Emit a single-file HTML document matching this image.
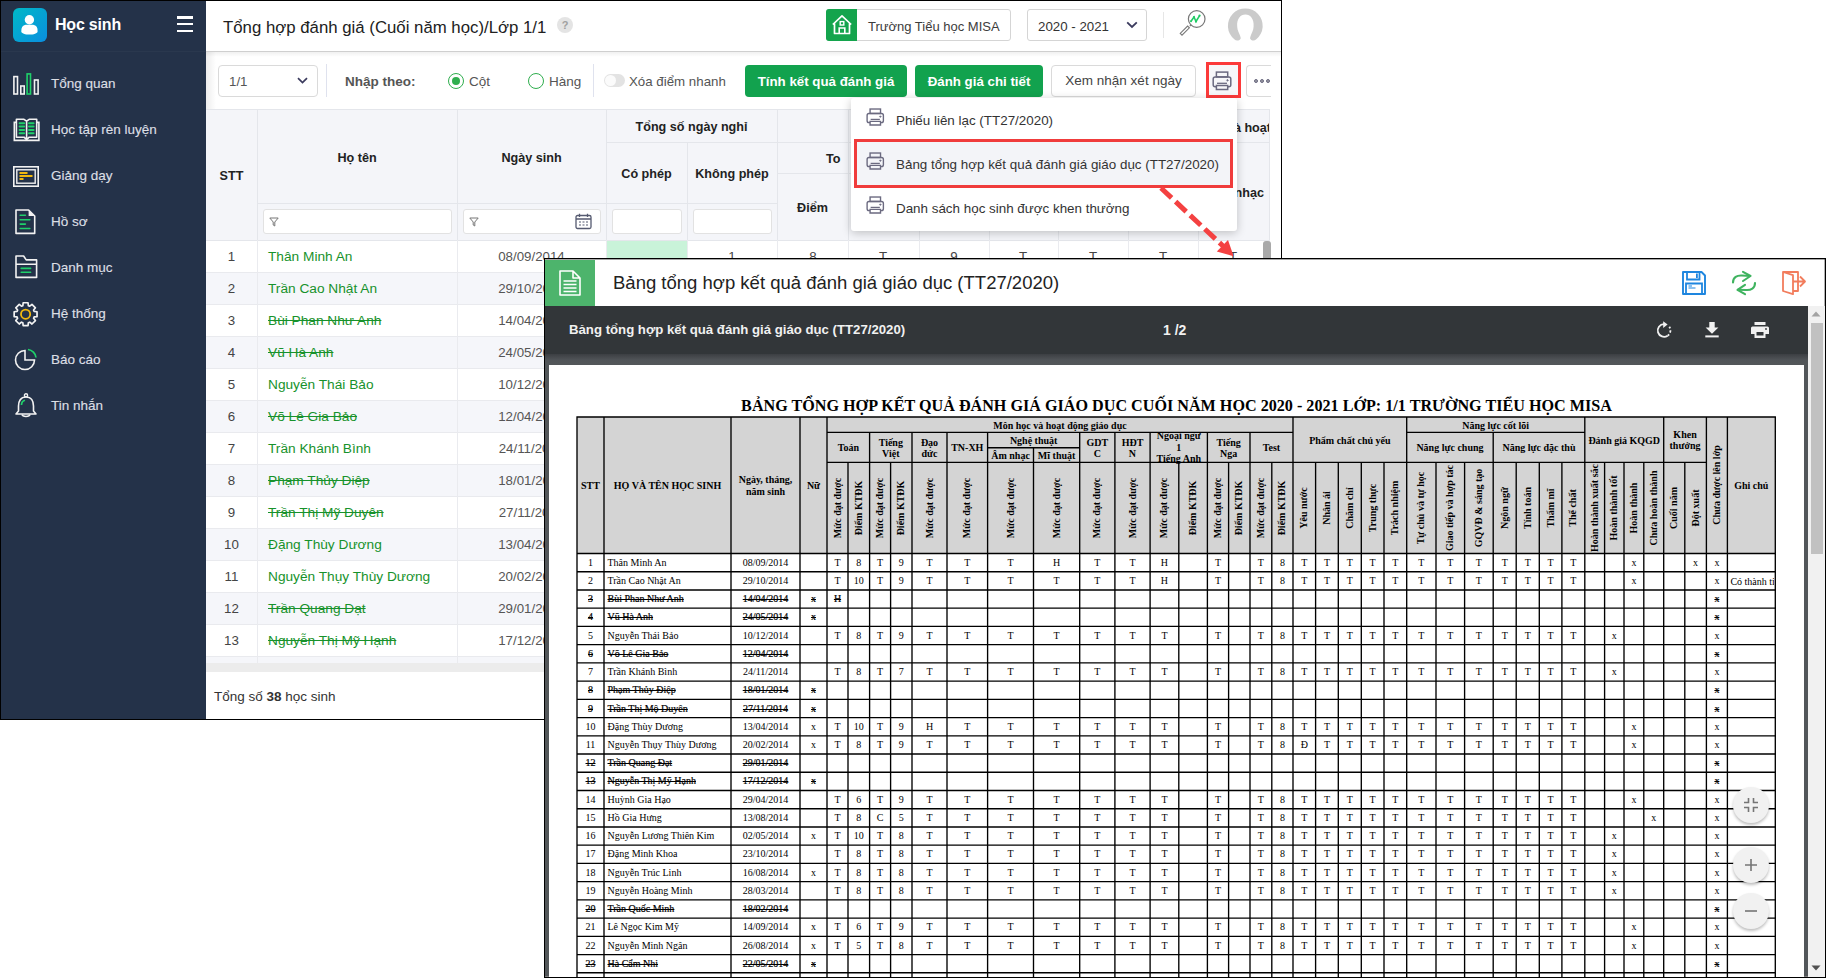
<!DOCTYPE html><html><head><meta charset="utf-8"><style>
html,body{margin:0;padding:0;}
body{width:1826px;height:978px;position:relative;overflow:hidden;background:#fff;font-family:'Liberation Sans', sans-serif;}
div{position:absolute;box-sizing:border-box;}
.t{white-space:nowrap;}
svg{position:absolute;overflow:visible;}
</style></head><body>
<div style="left:0px;top:0px;width:206px;height:720px;background:#243249;"></div>
<div style="left:206px;top:0px;width:1076px;height:720px;background:#fff;"></div>
<div style="left:206px;top:52px;width:10px;height:667px;background:linear-gradient(to right,rgba(0,0,0,0.07),rgba(0,0,0,0));"></div>
<div style="left:13px;top:8px;width:34px;height:34px;border-radius:6px;background:linear-gradient(135deg,#00b9c6 0%,#0a8ee0 100%);"></div>
<svg style="left:13px;top:8px" width="34" height="34" viewBox="0 0 34 34"><circle cx="16.4" cy="11.8" r="4.7" fill="#fff"/><path d="M8.3 23.5 C8.2 19.5 9.6 17.2 12.6 16.8 L20.2 16.8 C23.4 17.2 24.8 19.5 24.6 23.5 C24.5 27.6 8.4 27.6 8.3 23.5 Z" fill="#fff"/></svg>
<div class="t" style="font:bold 16px 'Liberation Sans', sans-serif;color:#fff;letter-spacing:-0.2px;left:55px;top:10.5px;height:28px;line-height:28px;">Học sinh</div>
<div style="left:177px;top:16.2px;width:16px;height:2.4px;background:#fff;"></div>
<div style="left:177px;top:23px;width:16px;height:2.4px;background:#fff;"></div>
<div style="left:177px;top:30px;width:16px;height:2.4px;background:#fff;"></div>
<div style="left:1px;top:51px;width:205px;height:1px;background:rgba(255,255,255,0.03);"></div>
<div class="t" style="font:13.5px 'Liberation Sans', sans-serif;color:#dcdfe4;-webkit-text-stroke:0.15px #dcdfe4;left:51px;top:73.5px;height:20px;line-height:20px;">Tổng quan</div>
<div class="t" style="font:13.5px 'Liberation Sans', sans-serif;color:#dcdfe4;-webkit-text-stroke:0.15px #dcdfe4;left:51px;top:119.5px;height:20px;line-height:20px;">Học tập rèn luyện</div>
<div class="t" style="font:13.5px 'Liberation Sans', sans-serif;color:#dcdfe4;-webkit-text-stroke:0.15px #dcdfe4;left:51px;top:165.5px;height:20px;line-height:20px;">Giảng dạy</div>
<div class="t" style="font:13.5px 'Liberation Sans', sans-serif;color:#dcdfe4;-webkit-text-stroke:0.15px #dcdfe4;left:51px;top:211.5px;height:20px;line-height:20px;">Hồ sơ</div>
<div class="t" style="font:13.5px 'Liberation Sans', sans-serif;color:#dcdfe4;-webkit-text-stroke:0.15px #dcdfe4;left:51px;top:257.5px;height:20px;line-height:20px;">Danh mục</div>
<div class="t" style="font:13.5px 'Liberation Sans', sans-serif;color:#dcdfe4;-webkit-text-stroke:0.15px #dcdfe4;left:51px;top:303.5px;height:20px;line-height:20px;">Hệ thống</div>
<div class="t" style="font:13.5px 'Liberation Sans', sans-serif;color:#dcdfe4;-webkit-text-stroke:0.15px #dcdfe4;left:51px;top:349.5px;height:20px;line-height:20px;">Báo cáo</div>
<div class="t" style="font:13.5px 'Liberation Sans', sans-serif;color:#dcdfe4;-webkit-text-stroke:0.15px #dcdfe4;left:51px;top:395.5px;height:20px;line-height:20px;">Tin nhắn</div>
<svg style="left:13px;top:73px" width="26" height="22" viewBox="0 0 26 22">
<rect x="0.9" y="3.6" width="3.6" height="17.4" fill="none" stroke="#f2f2f2" stroke-width="1.6"/>
<rect x="7.8" y="13" width="3.4" height="8" fill="none" stroke="#f2f2f2" stroke-width="1.6"/>
<rect x="14.1" y="0.9" width="3.4" height="20.1" fill="none" stroke="#1fd06a" stroke-width="1.6"/>
<rect x="21.5" y="7" width="3.6" height="14" fill="none" stroke="#f2f2f2" stroke-width="1.6"/></svg>
<svg style="left:13px;top:118px" width="28" height="25" viewBox="0 0 28 25">
<path d="M3.4 4.4 L1.3 4.4 L1.3 22.4 L25.9 22.4 L25.9 4.4 L23.7 4.4" fill="none" stroke="#f2f2f2" stroke-width="1.6"/>
<path d="M3.4 1.3 L11 1.3 L13.6 3.2 L16.2 1.3 L23.7 1.3 L23.7 19.2 L16.2 19.2 L13.6 21.6 L11 19.2 L3.4 19.2 Z M13.6 3.2 L13.6 22.5" fill="none" stroke="#f2f2f2" stroke-width="1.6" stroke-linejoin="round"/>
<path d="M6.6 5.2h4.6M6.6 8.5h4.6M6.6 12h4.6M6.6 15.3h4.6M16 5.2h4.6M16 8.5h4.6M16 12h4.6M16 15.3h4.6" stroke="#1fd06a" stroke-width="2" stroke-linecap="round"/></svg>
<svg style="left:13px;top:166px" width="26" height="21" viewBox="0 0 26 21">
<rect x="0.8" y="0.8" width="24.4" height="19.4" fill="none" stroke="#f2f2f2" stroke-width="1.6"/>
<rect x="3.8" y="3.8" width="18.4" height="13.4" fill="none" stroke="#f2f2f2" stroke-width="1.4"/>
<path d="M6.5 7h8M6.5 10h13M6.5 13h4" stroke="#f2b90f" stroke-width="1.8"/></svg>
<svg style="left:15px;top:209px" width="22" height="26" viewBox="0 0 22 26">
<path d="M1 1 L13.6 1 L19.7 7 L19.7 24.4 L1 24.4 Z" fill="none" stroke="#f2f2f2" stroke-width="1.6" stroke-linejoin="round"/>
<path d="M13.6 1 L13.6 7 L19.7 7 Z" fill="#f2f2f2"/>
<path d="M5.2 6.2h5.2M5.2 10.8h9.6M5.2 15.1h5.2M5.2 19.5h9.6" stroke="#1fd06a" stroke-width="1.6" stroke-linecap="round"/></svg>
<svg style="left:15px;top:255px" width="23" height="24" viewBox="0 0 23 24">
<path d="M1 1 L8.6 1 L11.2 4.9 L21.6 4.9 L21.6 22.4 L1 22.4 Z M1 9.2 L21.6 9.2" fill="none" stroke="#f2f2f2" stroke-width="1.6" stroke-linejoin="round"/>
<path d="M6.2 13.4h9.4M6.2 17.2h9.4" stroke="#1fd06a" stroke-width="1.6" stroke-linecap="round"/></svg>
<svg style="left:13px;top:301px" width="26" height="26" viewBox="0 0 26 26">
<path d="M21.17 10.45 L24.04 10.76 L24.04 15.64 L21.17 15.95 L20.60 17.32 L22.42 19.57 L18.97 23.02 L16.72 21.20 L15.35 21.77 L15.04 24.64 L10.16 24.64 L9.85 21.77 L8.48 21.20 L6.23 23.02 L2.78 19.57 L4.60 17.32 L4.03 15.95 L1.16 15.64 L1.16 10.76 L4.03 10.45 L4.60 9.08 L2.78 6.83 L6.23 3.38 L8.48 5.20 L9.85 4.63 L10.16 1.76 L15.04 1.76 L15.35 4.63 L16.72 5.20 L18.97 3.38 L22.42 6.83 L20.60 9.08 Z" fill="none" stroke="#f2f2f2" stroke-width="1.7" stroke-linejoin="round"/>
<circle cx="12.6" cy="13.2" r="4.6" fill="none" stroke="#f2b90f" stroke-width="1.8"/></svg>
<svg style="left:14px;top:348px" width="24" height="24" viewBox="0 0 24 24">
<path d="M11 2.5 A9.5 9.5 0 1 0 20.5 12 L11 12 Z" fill="none" stroke="#f2f2f2" stroke-width="1.6"/>
<path d="M14 1.5 A9 9 0 0 1 22 9.5" fill="none" stroke="#1fd06a" stroke-width="1.7"/></svg>
<svg style="left:14px;top:393px" width="24" height="25" viewBox="0 0 24 25">
<circle cx="12" cy="2.3" r="1.6" fill="none" stroke="#f2f2f2" stroke-width="1.4"/>
<path d="M12 4 C6.5 4 4.5 8.5 4.5 13 L4.5 18 L2 21 L22 21 L19.5 18 L19.5 13 C19.5 8.5 17.5 4 12 4 Z" fill="none" stroke="#f2f2f2" stroke-width="1.6" stroke-linejoin="round"/>
<path d="M8 21.5 C8.5 24 15.5 24 16 21.5" fill="none" stroke="#f2f2f2" stroke-width="1.5"/>
<path d="M7.5 12 C7.6 9.5 9 7.8 11 7.3" fill="none" stroke="#1fd06a" stroke-width="1.7"/></svg>
<div style="left:206px;top:51px;width:1075px;height:1px;background:#cfcfcf;"></div>
<div style="left:206px;top:52px;width:1075px;height:5px;background:linear-gradient(to bottom,rgba(0,0,0,0.06),rgba(0,0,0,0));"></div>
<div class="t" style="font:16.8px 'Liberation Sans', sans-serif;color:#212121;left:223px;top:16.5px;height:22px;line-height:22px;">Tổng hợp đánh giá (Cuối năm học)/Lớp 1/1</div>
<div style="left:557px;top:17px;width:16px;height:16px;border-radius:50%;background:#e4e4e4;color:#a0a0a0;font:bold 11px 'Liberation Sans';text-align:center;line-height:16px;">?</div>
<div style="left:826px;top:9px;width:185px;height:32px;border:1px solid #d5d5d5;border-radius:3px;background:#fff;"></div>
<div style="left:826px;top:9px;width:31px;height:32px;border-radius:3px 0 0 3px;background:#14a44d;"></div>
<svg style="left:832px;top:14px" width="20" height="21" viewBox="0 0 20 21">
<path d="M2.5 9.5 L2.5 19.5 L17.5 19.5 L17.5 9.5 M0.8 10.5 L10 1.8 L19.2 10.5" fill="none" stroke="#fff" stroke-width="1.7" stroke-linejoin="round"/>
<path d="M7.2 19.5 L7.2 14 L12.8 14 L12.8 19.5" fill="none" stroke="#fff" stroke-width="1.6"/>
<rect x="8.2" y="7.6" width="3.6" height="3.4" fill="none" stroke="#fff" stroke-width="1.4"/></svg>
<div class="t" style="font:13px 'Liberation Sans', sans-serif;color:#3c3c3c;left:868px;top:16.5px;height:20px;line-height:20px;">Trường Tiểu học MISA</div>
<div style="left:1027px;top:9px;width:120px;height:32px;border:1px solid #d5d5d5;border-radius:3px;background:#fff;"></div>
<div class="t" style="font:13.3px 'Liberation Sans', sans-serif;color:#333;left:1038px;top:16.5px;height:20px;line-height:20px;">2020 - 2021</div>
<svg style="left:1126px;top:21px" width="12" height="8" viewBox="0 0 12 8"><path d="M1.2 1.3 L6 6 L10.8 1.3" fill="none" stroke="#3b3b5e" stroke-width="1.8"/></svg>
<div style="left:1163px;top:12px;width:1px;height:26px;background:#e6e6e6;"></div>
<svg style="left:1179px;top:9px" width="28" height="28" viewBox="0 0 28 28">
<circle cx="17.7" cy="10" r="8.3" fill="#fff" stroke="#777" stroke-width="1.2"/>
<path d="M1.2 24.4 L3 26.2 L10.4 18.8 L8.6 17 Z" fill="#fff" stroke="#777" stroke-width="1.1"/>
<path d="M10.8 17.2 L12.4 15.6" stroke="#777" stroke-width="1.2"/>
<path d="M12 12.3 L15 8 L17 12.5 L20.6 6.6" fill="none" stroke="#22cc66" stroke-width="1.6"/>
<circle cx="12" cy="12.3" r="1" fill="#22cc66"/><circle cx="15" cy="8" r="1.1" fill="#22cc66"/><circle cx="17" cy="12.5" r="1.1" fill="#22cc66"/><circle cx="20.6" cy="6.6" r="1.1" fill="#22cc66"/></svg>
<svg style="left:1226px;top:8px" width="40" height="40" viewBox="0 0 40 40">
<path d="M8.3 31.3 A17.4 17.4 0 1 1 30.3 31.3 Q28 33.5 25.3 32 Q23.5 31 24.2 29.3 C25.5 25 27.6 22.5 27.6 18.5 C28.2 11 24.5 6.5 19.4 6.5 C14.3 6.5 10.6 11 11.2 18.5 C11.2 22.5 13.3 25 14.6 29.3 Q15.3 31 13.5 32 Q10.6 33.5 8.3 31.3 Z" fill="#cbcbcb"/></svg>
<div style="left:218px;top:65px;width:100px;height:32px;border:1px solid #dadada;border-radius:4px;background:#fff;"></div>
<div class="t" style="font:13.3px 'Liberation Sans', sans-serif;color:#555;left:229px;top:71.5px;height:20px;line-height:20px;">1/1</div>
<svg style="left:297px;top:77px" width="11" height="8" viewBox="0 0 11 8"><path d="M1 1.2 L5.5 5.6 L10 1.2" fill="none" stroke="#3b3b5e" stroke-width="1.7"/></svg>
<div style="left:326px;top:64px;width:1px;height:33px;background:#dfe2ee;"></div>
<div class="t" style="font:bold 13.5px 'Liberation Sans', sans-serif;color:#555;left:345px;top:71.5px;height:20px;line-height:20px;">Nhập theo:</div>
<div style="left:448px;top:73px;width:16px;height:16px;border:1.6px solid #2fae4e;border-radius:50%;"></div>
<div style="left:452px;top:77px;width:8px;height:8px;background:#2fae4e;border-radius:50%;"></div>
<div class="t" style="font:13.5px 'Liberation Sans', sans-serif;color:#555;left:469px;top:71.5px;height:20px;line-height:20px;">Cột</div>
<div style="left:528px;top:73px;width:16px;height:16px;border:1.6px solid #2fae4e;border-radius:50%;"></div>
<div class="t" style="font:13.5px 'Liberation Sans', sans-serif;color:#555;left:549px;top:71.5px;height:20px;line-height:20px;">Hàng</div>
<div style="left:593px;top:64px;width:1px;height:33px;background:#dfe2ee;"></div>
<div style="left:604px;top:74px;width:21px;height:13px;border-radius:7px;background:#e3e3e3;"></div>
<div style="left:605px;top:75px;width:11px;height:11px;border-radius:50%;background:#fbfbfb;"></div>
<div class="t" style="font:13.3px 'Liberation Sans', sans-serif;color:#555;left:629px;top:71.5px;height:20px;line-height:20px;">Xóa điểm nhanh</div>
<div style="left:745px;top:65px;width:162px;height:32px;border-radius:4px;background:#12a24e;color:#fff;font:bold 13.3px 'Liberation Sans', sans-serif;text-align:center;line-height:33px;">Tính kết quả đánh giá</div>
<div style="left:915px;top:65px;width:128px;height:32px;border-radius:4px;background:#12a24e;color:#fff;font:bold 13.3px 'Liberation Sans', sans-serif;text-align:center;line-height:33px;">Đánh giá chi tiết</div>
<div style="left:1051px;top:65px;width:145px;height:32px;border-radius:4px;border:1px solid #dadada;background:#fff;color:#444;font:13.5px 'Liberation Sans', sans-serif;text-align:center;line-height:30px;">Xem nhận xét ngày</div>
<div style="left:1206px;top:62px;width:35px;height:36px;border:3px solid #fc3a3a;background:#f7f7f9;"></div>
<svg style="left:1212px;top:71px" width="20" height="20" viewBox="0 0 20 20">
<rect x="4.4" y="1.1" width="11.3" height="4.8" fill="none" stroke="#6b6a80" stroke-width="1.5"/>
<path d="M4.4 15.8 L3.2 15.8 Q1.2 15.8 1.2 13.8 L1.2 8 Q1.2 6 3.2 6 L16.8 6 Q18.8 6 18.8 8 L18.8 13.8 Q18.8 15.8 16.8 15.8 L15.7 15.8" fill="none" stroke="#6b6a80" stroke-width="1.5"/>
<path d="M4.4 18.4 L4.4 14.4 L15.7 14.4 L15.7 18.4 Z" fill="#f7f7f9" stroke="#6b6a80" stroke-width="1.5"/>
<path d="M5 12.3 H15" stroke="#6b6a80" stroke-width="1.3"/>
<path d="M15.5 8.4 L16.4 9.3 L15.5 10.2 L14.6 9.3 Z" fill="#6b6a80" stroke="#6b6a80" stroke-width="0.8"/></svg>
<div style="left:1246px;top:65px;width:25px;height:32px;border:1px solid #dadada;border-right:none;border-radius:4px 0 0 4px;background:#fff;"></div><div style="left:1271px;top:58px;width:10px;height:42px;background:#fff;"></div>
<div style="left:1254px;top:79px;width:4.2px;height:4.2px;border-radius:50%;border:1.3px solid #6b6a80;background:#9a9aa6;"></div>
<div style="left:1260px;top:79px;width:4.2px;height:4.2px;border-radius:50%;border:1.3px solid #6b6a80;background:#9a9aa6;"></div>
<div style="left:1266px;top:79px;width:4.2px;height:4.2px;border-radius:50%;border:1.3px solid #6b6a80;background:#9a9aa6;"></div>
<div style="left:1271px;top:58px;width:10px;height:51px;background:#fff;"></div>
<div style="left:206px;top:109px;width:1064px;height:131px;background:#f4f5f9;"></div>
<div style="left:206px;top:109px;width:1064px;height:1px;background:#e4e6eb;"></div>
<div style="left:206px;top:240px;width:1064px;height:1px;background:#e4e6eb;"></div>
<div style="left:257px;top:109px;width:1px;height:131px;background:#e4e6eb;"></div>
<div style="left:457px;top:109px;width:1px;height:131px;background:#e4e6eb;"></div>
<div style="left:606px;top:109px;width:1px;height:131px;background:#e4e6eb;"></div>
<div style="left:777px;top:109px;width:1px;height:131px;background:#e4e6eb;"></div>
<div style="left:848px;top:109px;width:1px;height:131px;background:#e4e6eb;"></div>
<div style="left:919px;top:109px;width:1px;height:131px;background:#e4e6eb;"></div>
<div style="left:989px;top:109px;width:1px;height:131px;background:#e4e6eb;"></div>
<div style="left:1058px;top:109px;width:1px;height:131px;background:#e4e6eb;"></div>
<div style="left:1128px;top:109px;width:1px;height:131px;background:#e4e6eb;"></div>
<div style="left:1198px;top:109px;width:1px;height:131px;background:#e4e6eb;"></div>
<div style="left:1269px;top:109px;width:1px;height:131px;background:#e4e6eb;"></div>
<div style="left:687px;top:142px;width:1px;height:98px;background:#e4e6eb;"></div>
<div style="left:606px;top:142px;width:663px;height:1px;background:#e4e6eb;"></div>
<div style="left:777px;top:173px;width:421px;height:1px;background:#e4e6eb;"></div>
<div style="left:257px;top:203px;width:520px;height:1px;background:#e4e6eb;"></div>
<div class="t" style="font:bold 12.6px 'Liberation Sans', sans-serif;color:#222;left:206px;top:165.5px;width:51px;height:20px;line-height:20px;text-align:center;">STT</div>
<div class="t" style="font:bold 12.6px 'Liberation Sans', sans-serif;color:#222;left:257px;top:147.5px;width:200px;height:20px;line-height:20px;text-align:center;">Họ tên</div>
<div class="t" style="font:bold 12.6px 'Liberation Sans', sans-serif;color:#222;left:457px;top:147.5px;width:149px;height:20px;line-height:20px;text-align:center;">Ngày sinh</div>
<div class="t" style="font:bold 12.6px 'Liberation Sans', sans-serif;color:#222;left:606px;top:116.5px;width:171px;height:20px;line-height:20px;text-align:center;">Tổng số ngày nghỉ</div>
<div class="t" style="font:bold 12.6px 'Liberation Sans', sans-serif;color:#222;left:606px;top:163.5px;width:81px;height:20px;line-height:20px;text-align:center;">Có phép</div>
<div class="t" style="font:bold 12.6px 'Liberation Sans', sans-serif;color:#222;left:687px;top:163.5px;width:90px;height:20px;line-height:20px;text-align:center;">Không phép</div>
<div class="t" style="font:bold 12.6px 'Liberation Sans', sans-serif;color:#222;left:826px;top:148.5px;height:20px;line-height:20px;">To</div>
<div class="t" style="font:bold 12.6px 'Liberation Sans', sans-serif;color:#222;left:777px;top:197.5px;width:71px;height:20px;line-height:20px;text-align:center;">Điểm</div>
<div style="left:1199px;top:110px;width:70px;height:130px;overflow:hidden;">
<div class="t" style="font:bold 12.6px 'Liberation Sans', sans-serif;color:#222;right:-2px;top:7.5px;height:20px;line-height:20px;">Môn học và hoạt</div>
<div class="t" style="font:bold 12.6px 'Liberation Sans', sans-serif;color:#222;right:5px;top:72.5px;height:20px;line-height:20px;">Âm nhạc</div>
</div>
<div style="left:263px;top:209px;width:189px;height:25px;border:1px solid #e2e2e2;border-radius:3px;background:#fff;"></div>
<div style="left:463px;top:209px;width:138px;height:25px;border:1px solid #e2e2e2;border-radius:3px;background:#fff;"></div>
<div style="left:612px;top:209px;width:70px;height:25px;border:1px solid #e2e2e2;border-radius:3px;background:#fff;"></div>
<div style="left:693px;top:209px;width:79px;height:25px;border:1px solid #e2e2e2;border-radius:3px;background:#fff;"></div>
<svg style="left:269px;top:217px" width="10" height="10" viewBox="0 0 10 10"><path d="M0.8 1 L9.2 1 L5.8 5 L5.8 9 L4.2 8 L4.2 5 Z" fill="none" stroke="#777" stroke-width="1"/></svg>
<svg style="left:469px;top:217px" width="10" height="10" viewBox="0 0 10 10"><path d="M0.8 1 L9.2 1 L5.8 5 L5.8 9 L4.2 8 L4.2 5 Z" fill="none" stroke="#777" stroke-width="1"/></svg>
<svg style="left:575px;top:213px" width="17" height="17" viewBox="0 0 17 17">
<rect x="1" y="2.5" width="15" height="13" rx="1.5" fill="none" stroke="#555a70" stroke-width="1.3"/>
<path d="M1 6 L16 6 M4.5 0.8 L4.5 4 M12.5 0.8 L12.5 4" stroke="#555a70" stroke-width="1.3"/>
<path d="M4 9h2M7.5 9h2M11 9h2M4 12h2M7.5 12h2M11 12h2" stroke="#555a70" stroke-width="1.2"/></svg>
<div style="left:206px;top:241px;width:1064px;height:31px;background:#fff;"></div>
<div style="left:206px;top:272px;width:1064px;height:1px;background:#e9eaee;"></div>
<div style="left:257px;top:240px;width:1px;height:32px;background:#eaebef;"></div>
<div style="left:457px;top:240px;width:1px;height:32px;background:#eaebef;"></div>
<div style="left:606px;top:240px;width:1px;height:32px;background:#eaebef;"></div>
<div style="left:687px;top:240px;width:1px;height:32px;background:#eaebef;"></div>
<div style="left:777px;top:240px;width:1px;height:32px;background:#eaebef;"></div>
<div style="left:848px;top:240px;width:1px;height:32px;background:#eaebef;"></div>
<div style="left:919px;top:240px;width:1px;height:32px;background:#eaebef;"></div>
<div style="left:989px;top:240px;width:1px;height:32px;background:#eaebef;"></div>
<div style="left:1058px;top:240px;width:1px;height:32px;background:#eaebef;"></div>
<div style="left:1128px;top:240px;width:1px;height:32px;background:#eaebef;"></div>
<div style="left:1198px;top:240px;width:1px;height:32px;background:#eaebef;"></div>
<div style="left:1269px;top:240px;width:1px;height:32px;background:#eaebef;"></div>
<div class="t" style="font:13.3px 'Liberation Sans', sans-serif;color:#444;left:206px;top:246.7px;width:51px;height:20px;line-height:20px;text-align:center;">1</div>
<div class="t" style="font:13.7px 'Liberation Sans', sans-serif;color:#17922b;left:268px;top:246.7px;height:20px;line-height:20px;">Thân Minh An</div>
<div class="t" style="font:13.3px 'Liberation Sans', sans-serif;color:#555;left:457px;top:246.7px;width:149px;height:20px;line-height:20px;text-align:center;">08/09/2014</div>
<div style="left:206px;top:273px;width:1064px;height:31px;background:#f5f6fa;"></div>
<div style="left:206px;top:304px;width:1064px;height:1px;background:#e9eaee;"></div>
<div style="left:257px;top:272px;width:1px;height:32px;background:#eaebef;"></div>
<div style="left:457px;top:272px;width:1px;height:32px;background:#eaebef;"></div>
<div style="left:606px;top:272px;width:1px;height:32px;background:#eaebef;"></div>
<div style="left:687px;top:272px;width:1px;height:32px;background:#eaebef;"></div>
<div style="left:777px;top:272px;width:1px;height:32px;background:#eaebef;"></div>
<div style="left:848px;top:272px;width:1px;height:32px;background:#eaebef;"></div>
<div style="left:919px;top:272px;width:1px;height:32px;background:#eaebef;"></div>
<div style="left:989px;top:272px;width:1px;height:32px;background:#eaebef;"></div>
<div style="left:1058px;top:272px;width:1px;height:32px;background:#eaebef;"></div>
<div style="left:1128px;top:272px;width:1px;height:32px;background:#eaebef;"></div>
<div style="left:1198px;top:272px;width:1px;height:32px;background:#eaebef;"></div>
<div style="left:1269px;top:272px;width:1px;height:32px;background:#eaebef;"></div>
<div class="t" style="font:13.3px 'Liberation Sans', sans-serif;color:#444;left:206px;top:278.7px;width:51px;height:20px;line-height:20px;text-align:center;">2</div>
<div class="t" style="font:13.7px 'Liberation Sans', sans-serif;color:#17922b;left:268px;top:278.7px;height:20px;line-height:20px;">Trần Cao Nhật An</div>
<div class="t" style="font:13.3px 'Liberation Sans', sans-serif;color:#555;left:457px;top:278.7px;width:149px;height:20px;line-height:20px;text-align:center;">29/10/2014</div>
<div style="left:206px;top:305px;width:1064px;height:31px;background:#fff;"></div>
<div style="left:206px;top:336px;width:1064px;height:1px;background:#e9eaee;"></div>
<div style="left:257px;top:304px;width:1px;height:32px;background:#eaebef;"></div>
<div style="left:457px;top:304px;width:1px;height:32px;background:#eaebef;"></div>
<div style="left:606px;top:304px;width:1px;height:32px;background:#eaebef;"></div>
<div style="left:687px;top:304px;width:1px;height:32px;background:#eaebef;"></div>
<div style="left:777px;top:304px;width:1px;height:32px;background:#eaebef;"></div>
<div style="left:848px;top:304px;width:1px;height:32px;background:#eaebef;"></div>
<div style="left:919px;top:304px;width:1px;height:32px;background:#eaebef;"></div>
<div style="left:989px;top:304px;width:1px;height:32px;background:#eaebef;"></div>
<div style="left:1058px;top:304px;width:1px;height:32px;background:#eaebef;"></div>
<div style="left:1128px;top:304px;width:1px;height:32px;background:#eaebef;"></div>
<div style="left:1198px;top:304px;width:1px;height:32px;background:#eaebef;"></div>
<div style="left:1269px;top:304px;width:1px;height:32px;background:#eaebef;"></div>
<div class="t" style="font:13.3px 'Liberation Sans', sans-serif;color:#444;left:206px;top:310.7px;width:51px;height:20px;line-height:20px;text-align:center;">3</div>
<div class="t" style="font:13.7px 'Liberation Sans', sans-serif;color:#17922b;text-decoration:line-through;left:268px;top:310.7px;height:20px;line-height:20px;">Bùi Phan Như Anh</div>
<div class="t" style="font:13.3px 'Liberation Sans', sans-serif;color:#555;left:457px;top:310.7px;width:149px;height:20px;line-height:20px;text-align:center;">14/04/2014</div>
<div style="left:206px;top:337px;width:1064px;height:31px;background:#f5f6fa;"></div>
<div style="left:206px;top:368px;width:1064px;height:1px;background:#e9eaee;"></div>
<div style="left:257px;top:336px;width:1px;height:32px;background:#eaebef;"></div>
<div style="left:457px;top:336px;width:1px;height:32px;background:#eaebef;"></div>
<div style="left:606px;top:336px;width:1px;height:32px;background:#eaebef;"></div>
<div style="left:687px;top:336px;width:1px;height:32px;background:#eaebef;"></div>
<div style="left:777px;top:336px;width:1px;height:32px;background:#eaebef;"></div>
<div style="left:848px;top:336px;width:1px;height:32px;background:#eaebef;"></div>
<div style="left:919px;top:336px;width:1px;height:32px;background:#eaebef;"></div>
<div style="left:989px;top:336px;width:1px;height:32px;background:#eaebef;"></div>
<div style="left:1058px;top:336px;width:1px;height:32px;background:#eaebef;"></div>
<div style="left:1128px;top:336px;width:1px;height:32px;background:#eaebef;"></div>
<div style="left:1198px;top:336px;width:1px;height:32px;background:#eaebef;"></div>
<div style="left:1269px;top:336px;width:1px;height:32px;background:#eaebef;"></div>
<div class="t" style="font:13.3px 'Liberation Sans', sans-serif;color:#444;left:206px;top:342.7px;width:51px;height:20px;line-height:20px;text-align:center;">4</div>
<div class="t" style="font:13.7px 'Liberation Sans', sans-serif;color:#17922b;text-decoration:line-through;left:268px;top:342.7px;height:20px;line-height:20px;">Vũ Hà Anh</div>
<div class="t" style="font:13.3px 'Liberation Sans', sans-serif;color:#555;left:457px;top:342.7px;width:149px;height:20px;line-height:20px;text-align:center;">24/05/2014</div>
<div style="left:206px;top:369px;width:1064px;height:31px;background:#fff;"></div>
<div style="left:206px;top:400px;width:1064px;height:1px;background:#e9eaee;"></div>
<div style="left:257px;top:368px;width:1px;height:32px;background:#eaebef;"></div>
<div style="left:457px;top:368px;width:1px;height:32px;background:#eaebef;"></div>
<div style="left:606px;top:368px;width:1px;height:32px;background:#eaebef;"></div>
<div style="left:687px;top:368px;width:1px;height:32px;background:#eaebef;"></div>
<div style="left:777px;top:368px;width:1px;height:32px;background:#eaebef;"></div>
<div style="left:848px;top:368px;width:1px;height:32px;background:#eaebef;"></div>
<div style="left:919px;top:368px;width:1px;height:32px;background:#eaebef;"></div>
<div style="left:989px;top:368px;width:1px;height:32px;background:#eaebef;"></div>
<div style="left:1058px;top:368px;width:1px;height:32px;background:#eaebef;"></div>
<div style="left:1128px;top:368px;width:1px;height:32px;background:#eaebef;"></div>
<div style="left:1198px;top:368px;width:1px;height:32px;background:#eaebef;"></div>
<div style="left:1269px;top:368px;width:1px;height:32px;background:#eaebef;"></div>
<div class="t" style="font:13.3px 'Liberation Sans', sans-serif;color:#444;left:206px;top:374.7px;width:51px;height:20px;line-height:20px;text-align:center;">5</div>
<div class="t" style="font:13.7px 'Liberation Sans', sans-serif;color:#17922b;left:268px;top:374.7px;height:20px;line-height:20px;">Nguyễn Thái Bảo</div>
<div class="t" style="font:13.3px 'Liberation Sans', sans-serif;color:#555;left:457px;top:374.7px;width:149px;height:20px;line-height:20px;text-align:center;">10/12/2014</div>
<div style="left:206px;top:401px;width:1064px;height:31px;background:#f5f6fa;"></div>
<div style="left:206px;top:432px;width:1064px;height:1px;background:#e9eaee;"></div>
<div style="left:257px;top:400px;width:1px;height:32px;background:#eaebef;"></div>
<div style="left:457px;top:400px;width:1px;height:32px;background:#eaebef;"></div>
<div style="left:606px;top:400px;width:1px;height:32px;background:#eaebef;"></div>
<div style="left:687px;top:400px;width:1px;height:32px;background:#eaebef;"></div>
<div style="left:777px;top:400px;width:1px;height:32px;background:#eaebef;"></div>
<div style="left:848px;top:400px;width:1px;height:32px;background:#eaebef;"></div>
<div style="left:919px;top:400px;width:1px;height:32px;background:#eaebef;"></div>
<div style="left:989px;top:400px;width:1px;height:32px;background:#eaebef;"></div>
<div style="left:1058px;top:400px;width:1px;height:32px;background:#eaebef;"></div>
<div style="left:1128px;top:400px;width:1px;height:32px;background:#eaebef;"></div>
<div style="left:1198px;top:400px;width:1px;height:32px;background:#eaebef;"></div>
<div style="left:1269px;top:400px;width:1px;height:32px;background:#eaebef;"></div>
<div class="t" style="font:13.3px 'Liberation Sans', sans-serif;color:#444;left:206px;top:406.7px;width:51px;height:20px;line-height:20px;text-align:center;">6</div>
<div class="t" style="font:13.7px 'Liberation Sans', sans-serif;color:#17922b;text-decoration:line-through;left:268px;top:406.7px;height:20px;line-height:20px;">Võ Lê Gia Bảo</div>
<div class="t" style="font:13.3px 'Liberation Sans', sans-serif;color:#555;left:457px;top:406.7px;width:149px;height:20px;line-height:20px;text-align:center;">12/04/2014</div>
<div style="left:206px;top:433px;width:1064px;height:31px;background:#fff;"></div>
<div style="left:206px;top:464px;width:1064px;height:1px;background:#e9eaee;"></div>
<div style="left:257px;top:432px;width:1px;height:32px;background:#eaebef;"></div>
<div style="left:457px;top:432px;width:1px;height:32px;background:#eaebef;"></div>
<div style="left:606px;top:432px;width:1px;height:32px;background:#eaebef;"></div>
<div style="left:687px;top:432px;width:1px;height:32px;background:#eaebef;"></div>
<div style="left:777px;top:432px;width:1px;height:32px;background:#eaebef;"></div>
<div style="left:848px;top:432px;width:1px;height:32px;background:#eaebef;"></div>
<div style="left:919px;top:432px;width:1px;height:32px;background:#eaebef;"></div>
<div style="left:989px;top:432px;width:1px;height:32px;background:#eaebef;"></div>
<div style="left:1058px;top:432px;width:1px;height:32px;background:#eaebef;"></div>
<div style="left:1128px;top:432px;width:1px;height:32px;background:#eaebef;"></div>
<div style="left:1198px;top:432px;width:1px;height:32px;background:#eaebef;"></div>
<div style="left:1269px;top:432px;width:1px;height:32px;background:#eaebef;"></div>
<div class="t" style="font:13.3px 'Liberation Sans', sans-serif;color:#444;left:206px;top:438.7px;width:51px;height:20px;line-height:20px;text-align:center;">7</div>
<div class="t" style="font:13.7px 'Liberation Sans', sans-serif;color:#17922b;left:268px;top:438.7px;height:20px;line-height:20px;">Trần Khánh Bình</div>
<div class="t" style="font:13.3px 'Liberation Sans', sans-serif;color:#555;left:457px;top:438.7px;width:149px;height:20px;line-height:20px;text-align:center;">24/11/2014</div>
<div style="left:206px;top:465px;width:1064px;height:31px;background:#f5f6fa;"></div>
<div style="left:206px;top:496px;width:1064px;height:1px;background:#e9eaee;"></div>
<div style="left:257px;top:464px;width:1px;height:32px;background:#eaebef;"></div>
<div style="left:457px;top:464px;width:1px;height:32px;background:#eaebef;"></div>
<div style="left:606px;top:464px;width:1px;height:32px;background:#eaebef;"></div>
<div style="left:687px;top:464px;width:1px;height:32px;background:#eaebef;"></div>
<div style="left:777px;top:464px;width:1px;height:32px;background:#eaebef;"></div>
<div style="left:848px;top:464px;width:1px;height:32px;background:#eaebef;"></div>
<div style="left:919px;top:464px;width:1px;height:32px;background:#eaebef;"></div>
<div style="left:989px;top:464px;width:1px;height:32px;background:#eaebef;"></div>
<div style="left:1058px;top:464px;width:1px;height:32px;background:#eaebef;"></div>
<div style="left:1128px;top:464px;width:1px;height:32px;background:#eaebef;"></div>
<div style="left:1198px;top:464px;width:1px;height:32px;background:#eaebef;"></div>
<div style="left:1269px;top:464px;width:1px;height:32px;background:#eaebef;"></div>
<div class="t" style="font:13.3px 'Liberation Sans', sans-serif;color:#444;left:206px;top:470.7px;width:51px;height:20px;line-height:20px;text-align:center;">8</div>
<div class="t" style="font:13.7px 'Liberation Sans', sans-serif;color:#17922b;text-decoration:line-through;left:268px;top:470.7px;height:20px;line-height:20px;">Phạm Thủy Điệp</div>
<div class="t" style="font:13.3px 'Liberation Sans', sans-serif;color:#555;left:457px;top:470.7px;width:149px;height:20px;line-height:20px;text-align:center;">18/01/2014</div>
<div style="left:206px;top:497px;width:1064px;height:31px;background:#fff;"></div>
<div style="left:206px;top:528px;width:1064px;height:1px;background:#e9eaee;"></div>
<div style="left:257px;top:496px;width:1px;height:32px;background:#eaebef;"></div>
<div style="left:457px;top:496px;width:1px;height:32px;background:#eaebef;"></div>
<div style="left:606px;top:496px;width:1px;height:32px;background:#eaebef;"></div>
<div style="left:687px;top:496px;width:1px;height:32px;background:#eaebef;"></div>
<div style="left:777px;top:496px;width:1px;height:32px;background:#eaebef;"></div>
<div style="left:848px;top:496px;width:1px;height:32px;background:#eaebef;"></div>
<div style="left:919px;top:496px;width:1px;height:32px;background:#eaebef;"></div>
<div style="left:989px;top:496px;width:1px;height:32px;background:#eaebef;"></div>
<div style="left:1058px;top:496px;width:1px;height:32px;background:#eaebef;"></div>
<div style="left:1128px;top:496px;width:1px;height:32px;background:#eaebef;"></div>
<div style="left:1198px;top:496px;width:1px;height:32px;background:#eaebef;"></div>
<div style="left:1269px;top:496px;width:1px;height:32px;background:#eaebef;"></div>
<div class="t" style="font:13.3px 'Liberation Sans', sans-serif;color:#444;left:206px;top:502.7px;width:51px;height:20px;line-height:20px;text-align:center;">9</div>
<div class="t" style="font:13.7px 'Liberation Sans', sans-serif;color:#17922b;text-decoration:line-through;left:268px;top:502.7px;height:20px;line-height:20px;">Trần Thị Mỹ Duyên</div>
<div class="t" style="font:13.3px 'Liberation Sans', sans-serif;color:#555;left:457px;top:502.7px;width:149px;height:20px;line-height:20px;text-align:center;">27/11/2014</div>
<div style="left:206px;top:529px;width:1064px;height:31px;background:#f5f6fa;"></div>
<div style="left:206px;top:560px;width:1064px;height:1px;background:#e9eaee;"></div>
<div style="left:257px;top:528px;width:1px;height:32px;background:#eaebef;"></div>
<div style="left:457px;top:528px;width:1px;height:32px;background:#eaebef;"></div>
<div style="left:606px;top:528px;width:1px;height:32px;background:#eaebef;"></div>
<div style="left:687px;top:528px;width:1px;height:32px;background:#eaebef;"></div>
<div style="left:777px;top:528px;width:1px;height:32px;background:#eaebef;"></div>
<div style="left:848px;top:528px;width:1px;height:32px;background:#eaebef;"></div>
<div style="left:919px;top:528px;width:1px;height:32px;background:#eaebef;"></div>
<div style="left:989px;top:528px;width:1px;height:32px;background:#eaebef;"></div>
<div style="left:1058px;top:528px;width:1px;height:32px;background:#eaebef;"></div>
<div style="left:1128px;top:528px;width:1px;height:32px;background:#eaebef;"></div>
<div style="left:1198px;top:528px;width:1px;height:32px;background:#eaebef;"></div>
<div style="left:1269px;top:528px;width:1px;height:32px;background:#eaebef;"></div>
<div class="t" style="font:13.3px 'Liberation Sans', sans-serif;color:#444;left:206px;top:534.7px;width:51px;height:20px;line-height:20px;text-align:center;">10</div>
<div class="t" style="font:13.7px 'Liberation Sans', sans-serif;color:#17922b;left:268px;top:534.7px;height:20px;line-height:20px;">Đặng Thùy Dương</div>
<div class="t" style="font:13.3px 'Liberation Sans', sans-serif;color:#555;left:457px;top:534.7px;width:149px;height:20px;line-height:20px;text-align:center;">13/04/2014</div>
<div style="left:206px;top:561px;width:1064px;height:31px;background:#fff;"></div>
<div style="left:206px;top:592px;width:1064px;height:1px;background:#e9eaee;"></div>
<div style="left:257px;top:560px;width:1px;height:32px;background:#eaebef;"></div>
<div style="left:457px;top:560px;width:1px;height:32px;background:#eaebef;"></div>
<div style="left:606px;top:560px;width:1px;height:32px;background:#eaebef;"></div>
<div style="left:687px;top:560px;width:1px;height:32px;background:#eaebef;"></div>
<div style="left:777px;top:560px;width:1px;height:32px;background:#eaebef;"></div>
<div style="left:848px;top:560px;width:1px;height:32px;background:#eaebef;"></div>
<div style="left:919px;top:560px;width:1px;height:32px;background:#eaebef;"></div>
<div style="left:989px;top:560px;width:1px;height:32px;background:#eaebef;"></div>
<div style="left:1058px;top:560px;width:1px;height:32px;background:#eaebef;"></div>
<div style="left:1128px;top:560px;width:1px;height:32px;background:#eaebef;"></div>
<div style="left:1198px;top:560px;width:1px;height:32px;background:#eaebef;"></div>
<div style="left:1269px;top:560px;width:1px;height:32px;background:#eaebef;"></div>
<div class="t" style="font:13.3px 'Liberation Sans', sans-serif;color:#444;left:206px;top:566.7px;width:51px;height:20px;line-height:20px;text-align:center;">11</div>
<div class="t" style="font:13.7px 'Liberation Sans', sans-serif;color:#17922b;left:268px;top:566.7px;height:20px;line-height:20px;">Nguyễn Thụy Thùy Dương</div>
<div class="t" style="font:13.3px 'Liberation Sans', sans-serif;color:#555;left:457px;top:566.7px;width:149px;height:20px;line-height:20px;text-align:center;">20/02/2014</div>
<div style="left:206px;top:593px;width:1064px;height:31px;background:#f5f6fa;"></div>
<div style="left:206px;top:624px;width:1064px;height:1px;background:#e9eaee;"></div>
<div style="left:257px;top:592px;width:1px;height:32px;background:#eaebef;"></div>
<div style="left:457px;top:592px;width:1px;height:32px;background:#eaebef;"></div>
<div style="left:606px;top:592px;width:1px;height:32px;background:#eaebef;"></div>
<div style="left:687px;top:592px;width:1px;height:32px;background:#eaebef;"></div>
<div style="left:777px;top:592px;width:1px;height:32px;background:#eaebef;"></div>
<div style="left:848px;top:592px;width:1px;height:32px;background:#eaebef;"></div>
<div style="left:919px;top:592px;width:1px;height:32px;background:#eaebef;"></div>
<div style="left:989px;top:592px;width:1px;height:32px;background:#eaebef;"></div>
<div style="left:1058px;top:592px;width:1px;height:32px;background:#eaebef;"></div>
<div style="left:1128px;top:592px;width:1px;height:32px;background:#eaebef;"></div>
<div style="left:1198px;top:592px;width:1px;height:32px;background:#eaebef;"></div>
<div style="left:1269px;top:592px;width:1px;height:32px;background:#eaebef;"></div>
<div class="t" style="font:13.3px 'Liberation Sans', sans-serif;color:#444;left:206px;top:598.7px;width:51px;height:20px;line-height:20px;text-align:center;">12</div>
<div class="t" style="font:13.7px 'Liberation Sans', sans-serif;color:#17922b;text-decoration:line-through;left:268px;top:598.7px;height:20px;line-height:20px;">Trần Quang Đạt</div>
<div class="t" style="font:13.3px 'Liberation Sans', sans-serif;color:#555;left:457px;top:598.7px;width:149px;height:20px;line-height:20px;text-align:center;">29/01/2014</div>
<div style="left:206px;top:625px;width:1064px;height:31px;background:#fff;"></div>
<div style="left:206px;top:656px;width:1064px;height:1px;background:#e9eaee;"></div>
<div style="left:257px;top:624px;width:1px;height:32px;background:#eaebef;"></div>
<div style="left:457px;top:624px;width:1px;height:32px;background:#eaebef;"></div>
<div style="left:606px;top:624px;width:1px;height:32px;background:#eaebef;"></div>
<div style="left:687px;top:624px;width:1px;height:32px;background:#eaebef;"></div>
<div style="left:777px;top:624px;width:1px;height:32px;background:#eaebef;"></div>
<div style="left:848px;top:624px;width:1px;height:32px;background:#eaebef;"></div>
<div style="left:919px;top:624px;width:1px;height:32px;background:#eaebef;"></div>
<div style="left:989px;top:624px;width:1px;height:32px;background:#eaebef;"></div>
<div style="left:1058px;top:624px;width:1px;height:32px;background:#eaebef;"></div>
<div style="left:1128px;top:624px;width:1px;height:32px;background:#eaebef;"></div>
<div style="left:1198px;top:624px;width:1px;height:32px;background:#eaebef;"></div>
<div style="left:1269px;top:624px;width:1px;height:32px;background:#eaebef;"></div>
<div class="t" style="font:13.3px 'Liberation Sans', sans-serif;color:#444;left:206px;top:630.7px;width:51px;height:20px;line-height:20px;text-align:center;">13</div>
<div class="t" style="font:13.7px 'Liberation Sans', sans-serif;color:#17922b;text-decoration:line-through;left:268px;top:630.7px;height:20px;line-height:20px;">Nguyễn Thị Mỹ Hạnh</div>
<div class="t" style="font:13.3px 'Liberation Sans', sans-serif;color:#555;left:457px;top:630.7px;width:149px;height:20px;line-height:20px;text-align:center;">17/12/2014</div>
<div style="left:206px;top:657px;width:1064px;height:6px;background:#f5f6fa;"></div>
<div style="left:206px;top:688px;width:1064px;height:1px;background:#e9eaee;"></div>
<div style="left:257px;top:656px;width:1px;height:7px;background:#eaebef;"></div>
<div style="left:457px;top:656px;width:1px;height:7px;background:#eaebef;"></div>
<div style="left:606px;top:656px;width:1px;height:7px;background:#eaebef;"></div>
<div style="left:687px;top:656px;width:1px;height:7px;background:#eaebef;"></div>
<div style="left:777px;top:656px;width:1px;height:7px;background:#eaebef;"></div>
<div style="left:848px;top:656px;width:1px;height:7px;background:#eaebef;"></div>
<div style="left:919px;top:656px;width:1px;height:7px;background:#eaebef;"></div>
<div style="left:989px;top:656px;width:1px;height:7px;background:#eaebef;"></div>
<div style="left:1058px;top:656px;width:1px;height:7px;background:#eaebef;"></div>
<div style="left:1128px;top:656px;width:1px;height:7px;background:#eaebef;"></div>
<div style="left:1198px;top:656px;width:1px;height:7px;background:#eaebef;"></div>
<div style="left:1269px;top:656px;width:1px;height:7px;background:#eaebef;"></div>
<div style="left:607px;top:241px;width:80px;height:31px;background:#c9f3d9;"></div>
<div class="t" style="font:13.3px 'Liberation Sans', sans-serif;color:#444;left:712px;top:246.7px;width:40px;height:20px;line-height:20px;text-align:center;">1</div>
<div class="t" style="font:13.3px 'Liberation Sans', sans-serif;color:#444;left:793px;top:246.7px;width:40px;height:20px;line-height:20px;text-align:center;">8</div>
<div class="t" style="font:13.3px 'Liberation Sans', sans-serif;color:#444;left:863px;top:246.7px;width:40px;height:20px;line-height:20px;text-align:center;">T</div>
<div class="t" style="font:13.3px 'Liberation Sans', sans-serif;color:#444;left:934px;top:246.7px;width:40px;height:20px;line-height:20px;text-align:center;">9</div>
<div class="t" style="font:13.3px 'Liberation Sans', sans-serif;color:#444;left:1003px;top:246.7px;width:40px;height:20px;line-height:20px;text-align:center;">T</div>
<div class="t" style="font:13.3px 'Liberation Sans', sans-serif;color:#444;left:1073px;top:246.7px;width:40px;height:20px;line-height:20px;text-align:center;">T</div>
<div class="t" style="font:13.3px 'Liberation Sans', sans-serif;color:#444;left:1143px;top:246.7px;width:40px;height:20px;line-height:20px;text-align:center;">T</div>
<div class="t" style="font:13.3px 'Liberation Sans', sans-serif;color:#444;left:1213px;top:246.7px;width:40px;height:20px;line-height:20px;text-align:center;">T</div>
<div style="left:1270px;top:109px;width:11px;height:563px;background:#fff;"></div>
<div style="left:1263px;top:241px;width:8px;height:30px;border-radius:3px;background:#a9a9a9;"></div>
<div style="left:206px;top:663px;width:1064px;height:9px;background:#ececec;"></div>
<div style="left:206px;top:672px;width:1075px;height:47px;background:#fff;"></div>
<div class="t" style="font:13.5px 'Liberation Sans', sans-serif;color:#333;left:214px;top:686.5px;height:20px;line-height:20px;">Tổng số <b>38</b> học sinh</div>
<div style="left:0px;top:0px;width:1282px;height:1px;background:#000;"></div>
<div style="left:0px;top:0px;width:1px;height:720px;background:#000;"></div>
<div style="left:1281px;top:0px;width:1px;height:720px;background:#000;"></div>
<div style="left:0px;top:719px;width:1282px;height:1px;background:#000;"></div>
<div style="left:851px;top:98px;width:386px;height:133px;background:#fff;border-radius:3px;box-shadow:0 2px 10px rgba(0,0,0,0.22);"></div>
<div style="left:855px;top:140px;width:378px;height:47px;background:#f3f4f8;"></div>
<div style="left:854px;top:138.5px;width:379px;height:49px;border:3px solid #f03c3c;"></div>
<svg style="left:865.5px;top:108px" width="18.5" height="18.5" viewBox="0 0 20 20">
<rect x="4.4" y="1.1" width="11.3" height="4.8" fill="none" stroke="#6b6a80" stroke-width="1.5"/>
<path d="M4.4 15.8 L3.2 15.8 Q1.2 15.8 1.2 13.8 L1.2 8 Q1.2 6 3.2 6 L16.8 6 Q18.8 6 18.8 8 L18.8 13.8 Q18.8 15.8 16.8 15.8 L15.7 15.8" fill="none" stroke="#6b6a80" stroke-width="1.5"/>
<path d="M4.4 18.4 L4.4 14.4 L15.7 14.4 L15.7 18.4 Z" fill="none" stroke="#6b6a80" stroke-width="1.5"/>
<path d="M5 12.3 H15" stroke="#6b6a80" stroke-width="1.3"/>
<path d="M15.5 8.4 L16.4 9.3 L15.5 10.2 L14.6 9.3 Z" fill="#6b6a80" stroke="#6b6a80" stroke-width="0.8"/></svg>
<svg style="left:865.5px;top:152px" width="18.5" height="18.5" viewBox="0 0 20 20">
<rect x="4.4" y="1.1" width="11.3" height="4.8" fill="none" stroke="#6b6a80" stroke-width="1.5"/>
<path d="M4.4 15.8 L3.2 15.8 Q1.2 15.8 1.2 13.8 L1.2 8 Q1.2 6 3.2 6 L16.8 6 Q18.8 6 18.8 8 L18.8 13.8 Q18.8 15.8 16.8 15.8 L15.7 15.8" fill="none" stroke="#6b6a80" stroke-width="1.5"/>
<path d="M4.4 18.4 L4.4 14.4 L15.7 14.4 L15.7 18.4 Z" fill="none" stroke="#6b6a80" stroke-width="1.5"/>
<path d="M5 12.3 H15" stroke="#6b6a80" stroke-width="1.3"/>
<path d="M15.5 8.4 L16.4 9.3 L15.5 10.2 L14.6 9.3 Z" fill="#6b6a80" stroke="#6b6a80" stroke-width="0.8"/></svg>
<svg style="left:865.5px;top:196px" width="18.5" height="18.5" viewBox="0 0 20 20">
<rect x="4.4" y="1.1" width="11.3" height="4.8" fill="none" stroke="#6b6a80" stroke-width="1.5"/>
<path d="M4.4 15.8 L3.2 15.8 Q1.2 15.8 1.2 13.8 L1.2 8 Q1.2 6 3.2 6 L16.8 6 Q18.8 6 18.8 8 L18.8 13.8 Q18.8 15.8 16.8 15.8 L15.7 15.8" fill="none" stroke="#6b6a80" stroke-width="1.5"/>
<path d="M4.4 18.4 L4.4 14.4 L15.7 14.4 L15.7 18.4 Z" fill="none" stroke="#6b6a80" stroke-width="1.5"/>
<path d="M5 12.3 H15" stroke="#6b6a80" stroke-width="1.3"/>
<path d="M15.5 8.4 L16.4 9.3 L15.5 10.2 L14.6 9.3 Z" fill="#6b6a80" stroke="#6b6a80" stroke-width="0.8"/></svg>
<div class="t" style="font:13.4px 'Liberation Sans', sans-serif;color:#333;left:896px;top:110.9px;height:20px;line-height:20px;">Phiếu liên lạc (TT27/2020)</div>
<div class="t" style="font:13.4px 'Liberation Sans', sans-serif;color:#333;left:896px;top:154.9px;height:20px;line-height:20px;">Bảng tổng hợp kết quả đánh giá giáo dục (TT27/2020)</div>
<div class="t" style="font:13.4px 'Liberation Sans', sans-serif;color:#333;left:896px;top:198.9px;height:20px;line-height:20px;">Danh sách học sinh được khen thưởng</div>
<svg style="left:0px;top:0px" width="1826" height="978" viewBox="0 0 1826 978">
<path d="M1161 188 L1223 246" stroke="#f44141" stroke-width="5" stroke-dasharray="14.5 5.5" fill="none"/>
<path d="M1233.6 256.2 L1216.8 251.6 L1228 240 Z" fill="#f44141"/></svg>
<div style="left:544px;top:258px;width:1282px;height:720px;background:#fff;"></div>
<div style="left:544px;top:258px;width:1282px;height:1px;background:#000;"></div>
<div style="left:544px;top:259px;width:1282px;height:1px;background:rgba(0,0,0,0.35);"></div>
<div style="left:544px;top:258px;width:1px;height:720px;background:#000;"></div>
<div style="left:1825px;top:258px;width:1px;height:720px;background:#000;"></div>
<div style="left:1824px;top:258px;width:1px;height:720px;background:rgba(0,0,0,0.3);"></div>
<div style="left:544px;top:977px;width:1282px;height:1px;background:#000;"></div>
<div style="left:544px;top:976px;width:1282px;height:1px;background:rgba(0,0,0,0.5);"></div>
<div style="left:545px;top:260px;width:50px;height:46px;background:#4db46c;"></div>
<svg style="left:559px;top:270px" width="22" height="26" viewBox="0 0 22 26">
<path d="M1 1 L14 1 L21 8 L21 25 L1 25 Z M14 1 L14 8 L21 8" fill="none" stroke="#fff" stroke-width="1.6" stroke-linejoin="round"/>
<path d="M4.5 11h13M4.5 14.5h13M4.5 18h13M4.5 21.5h13" stroke="#fff" stroke-width="1.5"/></svg>
<div class="t" style="font:18.5px 'Liberation Sans', sans-serif;color:#222;left:613px;top:270px;height:26px;line-height:26px;">Bảng tổng hợp kết quả đánh giá giáo dục (TT27/2020)</div>
<svg style="left:1682px;top:271px" width="24" height="24" viewBox="0 0 24 24">
<path d="M1 1 L19.5 1 L23 4.5 L23 23 L1 23 Z" fill="none" stroke="#1e86df" stroke-width="1.9" stroke-linejoin="round"/>
<path d="M5 1.5 L5 8.5 L17.5 8.5 L17.5 1.5" fill="none" stroke="#1e86df" stroke-width="1.8"/>
<rect x="14" y="2.5" width="1.8" height="4.5" fill="#1e86df"/>
<path d="M4 22.5 L4 12.5 L20 12.5 L20 22.5" fill="none" stroke="#1e86df" stroke-width="1.8"/>
<path d="M6.5 15h3.5M6.5 17h7" stroke="#1e86df" stroke-width="1.1"/></svg>
<svg style="left:1732px;top:271px" width="24" height="24" viewBox="0 0 24 24">
<path d="M1 11.5 C1 6 5 4.2 10 4.5 L18 5" fill="none" stroke="#3fb35f" stroke-width="2.1" stroke-linecap="round"/>
<path d="M11 0.8 L18.5 5 L11 10" fill="none" stroke="#3fb35f" stroke-width="2.1" stroke-linecap="round" stroke-linejoin="round"/>
<path d="M23 12 C23 17.5 19 19.3 14 19 L6 18.8" fill="none" stroke="#3fb35f" stroke-width="2.1" stroke-linecap="round"/>
<path d="M13 13.8 L5.5 18.8 L13 23.2" fill="none" stroke="#3fb35f" stroke-width="2.1" stroke-linecap="round" stroke-linejoin="round"/></svg>
<svg style="left:1782px;top:271px" width="25" height="24" viewBox="0 0 25 24">
<path d="M1 1 L16 1 L16 20 L11 20" fill="none" stroke="#f27d5d" stroke-width="1.8" stroke-linejoin="round"/>
<path d="M1 1 L11 4.2 L11 23.2 L1 20 Z" fill="none" stroke="#f27d5d" stroke-width="1.8" stroke-linejoin="round"/>
<path d="M11 10.5 L22.5 10.5 M18 5.5 L23 10.5 L18 15.5" fill="none" stroke="#f27d5d" stroke-width="1.8" stroke-linejoin="round"/></svg>
<div style="left:545px;top:306px;width:1263.5px;height:670px;background:#525659;"></div>
<div style="left:545px;top:306px;width:1263.5px;height:48px;background:#323639;"></div>
<div style="left:545px;top:354px;width:1263.5px;height:10px;background:linear-gradient(to bottom,#3c3f43,#505458 60%,#525659);"></div>
<div class="t" style="font:bold 13.2px 'Liberation Sans', sans-serif;color:#f1f1f1;left:569px;top:320px;height:20px;line-height:20px;">Bảng tổng hợp kết quả đánh giá giáo dục (TT27/2020)</div>
<div class="t" style="font:bold 14px 'Liberation Sans', sans-serif;color:#f1f1f1;left:1163px;top:320px;height:20px;line-height:20px;">1 /2</div>
<svg style="left:1656px;top:321px" width="16" height="17" viewBox="0 0 16 17">
<path d="M8 3.2 A6.3 6.3 0 1 0 11.6 14.7" fill="none" stroke="#f1f1f1" stroke-width="1.8"/>
<path d="M11.6 14.7 A6.3 6.3 0 0 0 13.3 5.8" fill="none" stroke="#f1f1f1" stroke-width="1.8" stroke-dasharray="2.1 1.9"/>
<path d="M7.2 0.2 L11.6 3.6 L7.2 7 Z" fill="#f1f1f1"/></svg>
<svg style="left:1705px;top:322px" width="14" height="16" viewBox="0 0 14 16">
<path d="M4.3 0 L9.7 0 L9.7 5.5 L13.4 5.5 L7 11.8 L0.6 5.5 L4.3 5.5 Z" fill="#f1f1f1"/>
<rect x="0.3" y="13.4" width="13.4" height="2" fill="#f1f1f1"/></svg>
<svg style="left:1751px;top:322px" width="18" height="16" viewBox="0 0 18 16">
<rect x="3.5" y="0" width="11" height="3" fill="#f1f1f1"/>
<path d="M1.5 4.5 L16.5 4.5 Q18 4.5 18 6 L18 12 L14.5 12 L14.5 16 L3.5 16 L3.5 12 L0 12 L0 6 Q0 4.5 1.5 4.5 Z M5.5 10 L5.5 13.5 L12.5 13.5 L12.5 10 Z" fill="#f1f1f1" fill-rule="evenodd"/>
<circle cx="15" cy="7" r="0.9" fill="#323639"/></svg>
<div style="left:1808px;top:306px;width:16.5px;height:670.5px;background:#f1f1f1;"></div>
<svg style="left:1811px;top:311px" width="10" height="6" viewBox="0 0 10 6"><path d="M0.5 5.5 L5 0.5 L9.5 5.5 Z" fill="#a3a3a3"/></svg>
<svg style="left:1811px;top:965px" width="10" height="6" viewBox="0 0 10 6"><path d="M0.5 0.5 L5 5.5 L9.5 0.5 Z" fill="#505050"/></svg>
<div style="left:1810.5px;top:323px;width:12.5px;height:231px;background:#c1c1c1;"></div>
<div style="left:549px;top:365px;width:1255px;height:611.5px;background:#fff;"></div>
<div style="left:549px;top:365px;width:1255px;height:611.5px;overflow:hidden;">
<div class="t" style="font:bold 16.15px 'Liberation Serif', serif;color:#000;left:0.00px;top:31.00px;width:1255.00px;height:20.00px;line-height:20.00px;text-align:center;">BẢNG TỔNG HỢP KẾT QUẢ ĐÁNH GIÁ GIÁO DỤC CUỐI NĂM HỌC 2020 - 2021 LỚP: 1/1 TRƯỜNG TIỂU HỌC MISA</div>
<div style="left:28.00px;top:52.00px;width:1198.30px;height:136.50px;background:#d4d4d4;"></div>
<svg style="left:0;top:0" width="1255" height="612"><path d="M27.40 52.00H1226.90M27.40 188.50H1226.90M27.40 206.73H1226.90M27.40 224.96H1226.90M27.40 243.19H1226.90M27.40 261.42H1226.90M27.40 279.65H1226.90M27.40 297.88H1226.90M27.40 316.11H1226.90M27.40 334.34H1226.90M27.40 352.57H1226.90M27.40 370.80H1226.90M27.40 389.03H1226.90M27.40 407.26H1226.90M27.40 425.49H1226.90M27.40 443.72H1226.90M27.40 461.95H1226.90M27.40 480.18H1226.90M27.40 498.41H1226.90M27.40 516.64H1226.90M27.40 534.87H1226.90M27.40 553.10H1226.90M27.40 571.33H1226.90M27.40 589.56H1226.90M27.40 607.79H1226.90M28.00 187.90V612.60M55.00 187.90V612.60M182.00 187.90V612.60M251.00 187.90V612.60M278.00 187.90V612.60M299.00 187.90V612.60M320.60 187.90V612.60M341.60 187.90V612.60M363.00 187.90V612.60M398.00 187.90V612.60M438.60 187.90V612.60M484.50 187.90V612.60M530.70 187.90V612.60M565.90 187.90V612.60M601.10 187.90V612.60M629.80 187.90V612.60M658.40 187.90V612.60M679.60 187.90V612.60M701.00 187.90V612.60M722.80 187.90V612.60M744.00 187.90V612.60M766.60 187.90V612.60M789.30 187.90V612.60M812.30 187.90V612.60M835.00 187.90V612.60M857.70 187.90V612.60M887.00 187.90V612.60M915.60 187.90V612.60M944.20 187.90V612.60M967.20 187.90V612.60M990.30 187.90V612.60M1012.90 187.90V612.60M1035.80 187.90V612.60M1055.60 187.90V612.60M1075.00 187.90V612.60M1094.80 187.90V612.60M1114.70 187.90V612.60M1135.80 187.90V612.60M1157.40 187.90V612.60M1178.40 187.90V612.60M1226.30 187.90V612.60M28.00 51.40V189.10M55.00 51.40V189.10M182.00 51.40V189.10M251.00 51.40V189.10M278.00 51.40V189.10M744.00 51.40V189.10M857.70 51.40V189.10M1035.80 51.40V189.10M1114.70 51.40V189.10M1157.40 51.40V189.10M1178.40 51.40V189.10M1226.30 51.40V189.10M277.40 67.40H744.60M320.60 66.80V189.10M363.00 66.80V189.10M398.00 66.80V189.10M438.60 66.80V189.10M530.70 66.80V189.10M565.90 66.80V189.10M601.10 66.80V189.10M658.40 66.80V189.10M701.00 66.80V189.10M299.00 96.80V189.10M341.60 96.80V189.10M484.50 96.80V189.10M629.80 96.80V189.10M679.60 96.80V189.10M722.80 96.80V189.10M438.00 82.70H531.30M484.50 82.10V189.10M277.40 97.40H1158.00M766.60 96.80V189.10M789.30 96.80V189.10M812.30 96.80V189.10M835.00 96.80V189.10M857.10 67.40H1036.40M944.20 66.80V189.10M887.00 96.80V189.10M915.60 96.80V189.10M967.20 96.80V189.10M990.30 96.80V189.10M1012.90 96.80V189.10M1055.60 96.80V189.10M1075.00 96.80V189.10M1094.80 96.80V189.10M1135.80 96.80V189.10" stroke="#000" stroke-width="1.35" fill="none"/></svg>
<div class="t" style="font:bold 10px 'Liberation Serif', serif;color:#000;line-height:11px;white-space:nowrap;left:28.00px;top:115.05px;width:27.00px;text-align:center;">STT</div>
<div class="t" style="font:bold 10px 'Liberation Serif', serif;color:#000;line-height:11px;white-space:nowrap;left:55.00px;top:115.05px;width:127.00px;text-align:center;">HỌ VÀ TÊN HỌC SINH</div>
<div class="t" style="font:bold 10px 'Liberation Serif', serif;color:#000;line-height:12px;white-space:nowrap;left:182.00px;top:108.55px;width:69.00px;text-align:center;">Ngày, tháng,<br>năm sinh</div>
<div class="t" style="font:bold 10px 'Liberation Serif', serif;color:#000;line-height:11px;white-space:nowrap;left:251.00px;top:115.05px;width:27.00px;text-align:center;">Nữ</div>
<div class="t" style="font:bold 10px 'Liberation Serif', serif;color:#000;line-height:11px;white-space:nowrap;left:278.00px;top:54.50px;width:466.00px;text-align:center;">Môn học và hoạt động giáo dục</div>
<div class="t" style="font:bold 10px 'Liberation Serif', serif;color:#000;line-height:11px;white-space:nowrap;left:278.00px;top:77.20px;width:42.60px;text-align:center;">Toán</div>
<div class="t" style="font:bold 10px 'Liberation Serif', serif;color:#000;line-height:11px;white-space:nowrap;left:320.60px;top:71.70px;width:42.40px;text-align:center;">Tiếng<br>Việt</div>
<div class="t" style="font:bold 10px 'Liberation Serif', serif;color:#000;line-height:11px;white-space:nowrap;left:363.00px;top:71.70px;width:35.00px;text-align:center;">Đạo<br>đức</div>
<div class="t" style="font:bold 10px 'Liberation Serif', serif;color:#000;line-height:11px;white-space:nowrap;left:398.00px;top:77.20px;width:40.60px;text-align:center;">TN-XH</div>
<div class="t" style="font:bold 10px 'Liberation Serif', serif;color:#000;line-height:11px;white-space:nowrap;left:438.60px;top:69.85px;width:92.10px;text-align:center;">Nghệ thuật</div>
<div class="t" style="font:bold 10px 'Liberation Serif', serif;color:#000;line-height:11px;white-space:nowrap;left:438.60px;top:84.85px;width:45.90px;text-align:center;">Âm nhạc</div>
<div class="t" style="font:bold 10px 'Liberation Serif', serif;color:#000;line-height:11px;white-space:nowrap;left:484.50px;top:84.85px;width:46.20px;text-align:center;">Mĩ thuật</div>
<div class="t" style="font:bold 10px 'Liberation Serif', serif;color:#000;line-height:11px;white-space:nowrap;left:530.70px;top:71.70px;width:35.20px;text-align:center;">GDT<br>C</div>
<div class="t" style="font:bold 10px 'Liberation Serif', serif;color:#000;line-height:11px;white-space:nowrap;left:565.90px;top:71.70px;width:35.20px;text-align:center;">HĐT<br>N</div>
<div class="t" style="font:bold 10px 'Liberation Serif', serif;color:#000;line-height:11.5px;white-space:nowrap;left:601.10px;top:65.45px;width:57.30px;text-align:center;">Ngoại ngữ<br>1<br>Tiếng Anh</div>
<div class="t" style="font:bold 10px 'Liberation Serif', serif;color:#000;line-height:11px;white-space:nowrap;left:658.40px;top:71.70px;width:42.60px;text-align:center;">Tiếng<br>Nga</div>
<div class="t" style="font:bold 10px 'Liberation Serif', serif;color:#000;line-height:11px;white-space:nowrap;left:701.00px;top:77.20px;width:43.00px;text-align:center;">Test</div>
<div class="t" style="font:bold 10px 'Liberation Serif', serif;color:#000;line-height:11px;white-space:nowrap;left:744.00px;top:69.50px;width:113.70px;text-align:center;">Phẩm chất chủ yếu</div>
<div class="t" style="font:bold 10px 'Liberation Serif', serif;color:#000;line-height:11px;white-space:nowrap;left:857.70px;top:54.50px;width:178.10px;text-align:center;">Năng lực cốt lõi</div>
<div class="t" style="font:bold 10px 'Liberation Serif', serif;color:#000;line-height:11px;white-space:nowrap;left:857.70px;top:77.20px;width:86.50px;text-align:center;">Năng lực chung</div>
<div class="t" style="font:bold 10px 'Liberation Serif', serif;color:#000;line-height:11px;white-space:nowrap;left:944.20px;top:77.20px;width:91.60px;text-align:center;">Năng lực đặc thù</div>
<div class="t" style="font:bold 10px 'Liberation Serif', serif;color:#000;line-height:11px;white-space:nowrap;left:1035.80px;top:69.50px;width:78.90px;text-align:center;">Đánh giá KQGD</div>
<div class="t" style="font:bold 10px 'Liberation Serif', serif;color:#000;line-height:11px;white-space:nowrap;left:1114.70px;top:64.00px;width:42.70px;text-align:center;">Khen<br>thưởng</div>
<div class="t" style="font:bold 10px 'Liberation Serif', serif;color:#000;line-height:11px;white-space:nowrap;left:1178.40px;top:115.05px;width:47.90px;text-align:center;">Ghi chú</div>
<div class="t" style="left:228.50px;top:136.95px;font:bold 10px 'Liberation Serif', serif;color:#000;width:120px;height:12px;line-height:12px;text-align:center;transform:rotate(-90deg);">Mức đạt được</div>
<div class="t" style="left:249.80px;top:136.95px;font:bold 10px 'Liberation Serif', serif;color:#000;width:120px;height:12px;line-height:12px;text-align:center;transform:rotate(-90deg);">Điểm KTĐK</div>
<div class="t" style="left:271.10px;top:136.95px;font:bold 10px 'Liberation Serif', serif;color:#000;width:120px;height:12px;line-height:12px;text-align:center;transform:rotate(-90deg);">Mức đạt được</div>
<div class="t" style="left:292.30px;top:136.95px;font:bold 10px 'Liberation Serif', serif;color:#000;width:120px;height:12px;line-height:12px;text-align:center;transform:rotate(-90deg);">Điểm KTĐK</div>
<div class="t" style="left:320.50px;top:136.95px;font:bold 10px 'Liberation Serif', serif;color:#000;width:120px;height:12px;line-height:12px;text-align:center;transform:rotate(-90deg);">Mức đạt được</div>
<div class="t" style="left:358.30px;top:136.95px;font:bold 10px 'Liberation Serif', serif;color:#000;width:120px;height:12px;line-height:12px;text-align:center;transform:rotate(-90deg);">Mức đạt được</div>
<div class="t" style="left:401.55px;top:136.95px;font:bold 10px 'Liberation Serif', serif;color:#000;width:120px;height:12px;line-height:12px;text-align:center;transform:rotate(-90deg);">Mức đạt được</div>
<div class="t" style="left:447.60px;top:136.95px;font:bold 10px 'Liberation Serif', serif;color:#000;width:120px;height:12px;line-height:12px;text-align:center;transform:rotate(-90deg);">Mức đạt được</div>
<div class="t" style="left:488.30px;top:136.95px;font:bold 10px 'Liberation Serif', serif;color:#000;width:120px;height:12px;line-height:12px;text-align:center;transform:rotate(-90deg);">Mức đạt được</div>
<div class="t" style="left:523.50px;top:136.95px;font:bold 10px 'Liberation Serif', serif;color:#000;width:120px;height:12px;line-height:12px;text-align:center;transform:rotate(-90deg);">Mức đạt được</div>
<div class="t" style="left:555.45px;top:136.95px;font:bold 10px 'Liberation Serif', serif;color:#000;width:120px;height:12px;line-height:12px;text-align:center;transform:rotate(-90deg);">Mức đạt được</div>
<div class="t" style="left:584.10px;top:136.95px;font:bold 10px 'Liberation Serif', serif;color:#000;width:120px;height:12px;line-height:12px;text-align:center;transform:rotate(-90deg);">Điểm KTĐK</div>
<div class="t" style="left:609.00px;top:136.95px;font:bold 10px 'Liberation Serif', serif;color:#000;width:120px;height:12px;line-height:12px;text-align:center;transform:rotate(-90deg);">Mức đạt được</div>
<div class="t" style="left:630.30px;top:136.95px;font:bold 10px 'Liberation Serif', serif;color:#000;width:120px;height:12px;line-height:12px;text-align:center;transform:rotate(-90deg);">Điểm KTĐK</div>
<div class="t" style="left:651.90px;top:136.95px;font:bold 10px 'Liberation Serif', serif;color:#000;width:120px;height:12px;line-height:12px;text-align:center;transform:rotate(-90deg);">Mức đạt được</div>
<div class="t" style="left:673.40px;top:136.95px;font:bold 10px 'Liberation Serif', serif;color:#000;width:120px;height:12px;line-height:12px;text-align:center;transform:rotate(-90deg);">Điểm KTĐK</div>
<div class="t" style="left:695.30px;top:136.95px;font:bold 10px 'Liberation Serif', serif;color:#000;width:120px;height:12px;line-height:12px;text-align:center;transform:rotate(-90deg);">Yêu nước</div>
<div class="t" style="left:717.95px;top:136.95px;font:bold 10px 'Liberation Serif', serif;color:#000;width:120px;height:12px;line-height:12px;text-align:center;transform:rotate(-90deg);">Nhân ái</div>
<div class="t" style="left:740.80px;top:136.95px;font:bold 10px 'Liberation Serif', serif;color:#000;width:120px;height:12px;line-height:12px;text-align:center;transform:rotate(-90deg);">Chăm chỉ</div>
<div class="t" style="left:763.65px;top:136.95px;font:bold 10px 'Liberation Serif', serif;color:#000;width:120px;height:12px;line-height:12px;text-align:center;transform:rotate(-90deg);">Trung thực</div>
<div class="t" style="left:786.35px;top:136.95px;font:bold 10px 'Liberation Serif', serif;color:#000;width:120px;height:12px;line-height:12px;text-align:center;transform:rotate(-90deg);">Trách nhiệm</div>
<div class="t" style="left:812.35px;top:136.95px;font:bold 10px 'Liberation Serif', serif;color:#000;width:120px;height:12px;line-height:12px;text-align:center;transform:rotate(-90deg);">Tự chủ và tự học</div>
<div class="t" style="left:841.30px;top:136.95px;font:bold 10px 'Liberation Serif', serif;color:#000;width:120px;height:12px;line-height:12px;text-align:center;transform:rotate(-90deg);">Giao tiếp và hợp tác</div>
<div class="t" style="left:869.90px;top:136.95px;font:bold 10px 'Liberation Serif', serif;color:#000;width:120px;height:12px;line-height:12px;text-align:center;transform:rotate(-90deg);">GQVĐ &amp; sáng tạo</div>
<div class="t" style="left:895.70px;top:136.95px;font:bold 10px 'Liberation Serif', serif;color:#000;width:120px;height:12px;line-height:12px;text-align:center;transform:rotate(-90deg);">Ngôn ngữ</div>
<div class="t" style="left:918.75px;top:136.95px;font:bold 10px 'Liberation Serif', serif;color:#000;width:120px;height:12px;line-height:12px;text-align:center;transform:rotate(-90deg);">Tính toán</div>
<div class="t" style="left:941.60px;top:136.95px;font:bold 10px 'Liberation Serif', serif;color:#000;width:120px;height:12px;line-height:12px;text-align:center;transform:rotate(-90deg);">Thẩm mĩ</div>
<div class="t" style="left:964.35px;top:136.95px;font:bold 10px 'Liberation Serif', serif;color:#000;width:120px;height:12px;line-height:12px;text-align:center;transform:rotate(-90deg);">Thể chất</div>
<div class="t" style="left:985.70px;top:136.95px;font:bold 10px 'Liberation Serif', serif;color:#000;width:120px;height:12px;line-height:12px;text-align:center;transform:rotate(-90deg);">Hoàn thành xuất sắc</div>
<div class="t" style="left:1005.30px;top:136.95px;font:bold 10px 'Liberation Serif', serif;color:#000;width:120px;height:12px;line-height:12px;text-align:center;transform:rotate(-90deg);">Hoàn thành tốt</div>
<div class="t" style="left:1024.90px;top:136.95px;font:bold 10px 'Liberation Serif', serif;color:#000;width:120px;height:12px;line-height:12px;text-align:center;transform:rotate(-90deg);">Hoàn thành</div>
<div class="t" style="left:1044.75px;top:136.95px;font:bold 10px 'Liberation Serif', serif;color:#000;width:120px;height:12px;line-height:12px;text-align:center;transform:rotate(-90deg);">Chưa hoàn thành</div>
<div class="t" style="left:1065.25px;top:136.95px;font:bold 10px 'Liberation Serif', serif;color:#000;width:120px;height:12px;line-height:12px;text-align:center;transform:rotate(-90deg);">Cuối năm</div>
<div class="t" style="left:1086.60px;top:136.95px;font:bold 10px 'Liberation Serif', serif;color:#000;width:120px;height:12px;line-height:12px;text-align:center;transform:rotate(-90deg);">Đột xuất</div>
<div class="t" style="left:1097.90px;top:114.25px;font:bold 10px 'Liberation Serif', serif;color:#000;width:140px;height:12px;line-height:12px;text-align:center;transform:rotate(-90deg);">Chưa được lên lớp</div>
<div class="t" style="font:10px 'Liberation Serif', serif;color:#000;left:28.00px;top:190.70px;width:27.00px;height:13.00px;line-height:13.00px;text-align:center;">1</div>
<div class="t" style="font:10px 'Liberation Serif', serif;color:#000;left:58.50px;top:190.70px;height:13.00px;line-height:13.00px;">Thân Minh An</div>
<div class="t" style="font:10px 'Liberation Serif', serif;color:#000;left:182.00px;top:190.70px;width:69.00px;height:13.00px;line-height:13.00px;text-align:center;">08/09/2014</div>
<div class="t" style="font:10px 'Liberation Serif', serif;color:#000;left:278.00px;top:190.70px;width:21.00px;height:13.00px;line-height:13.00px;text-align:center;">T</div>
<div class="t" style="font:10px 'Liberation Serif', serif;color:#000;left:299.00px;top:190.70px;width:21.60px;height:13.00px;line-height:13.00px;text-align:center;">8</div>
<div class="t" style="font:10px 'Liberation Serif', serif;color:#000;left:320.60px;top:190.70px;width:21.00px;height:13.00px;line-height:13.00px;text-align:center;">T</div>
<div class="t" style="font:10px 'Liberation Serif', serif;color:#000;left:341.60px;top:190.70px;width:21.40px;height:13.00px;line-height:13.00px;text-align:center;">9</div>
<div class="t" style="font:10px 'Liberation Serif', serif;color:#000;left:363.00px;top:190.70px;width:35.00px;height:13.00px;line-height:13.00px;text-align:center;">T</div>
<div class="t" style="font:10px 'Liberation Serif', serif;color:#000;left:398.00px;top:190.70px;width:40.60px;height:13.00px;line-height:13.00px;text-align:center;">T</div>
<div class="t" style="font:10px 'Liberation Serif', serif;color:#000;left:438.60px;top:190.70px;width:45.90px;height:13.00px;line-height:13.00px;text-align:center;">T</div>
<div class="t" style="font:10px 'Liberation Serif', serif;color:#000;left:484.50px;top:190.70px;width:46.20px;height:13.00px;line-height:13.00px;text-align:center;">H</div>
<div class="t" style="font:10px 'Liberation Serif', serif;color:#000;left:530.70px;top:190.70px;width:35.20px;height:13.00px;line-height:13.00px;text-align:center;">T</div>
<div class="t" style="font:10px 'Liberation Serif', serif;color:#000;left:565.90px;top:190.70px;width:35.20px;height:13.00px;line-height:13.00px;text-align:center;">T</div>
<div class="t" style="font:10px 'Liberation Serif', serif;color:#000;left:601.10px;top:190.70px;width:28.70px;height:13.00px;line-height:13.00px;text-align:center;">H</div>
<div class="t" style="font:10px 'Liberation Serif', serif;color:#000;left:658.40px;top:190.70px;width:21.20px;height:13.00px;line-height:13.00px;text-align:center;">T</div>
<div class="t" style="font:10px 'Liberation Serif', serif;color:#000;left:701.00px;top:190.70px;width:21.80px;height:13.00px;line-height:13.00px;text-align:center;">T</div>
<div class="t" style="font:10px 'Liberation Serif', serif;color:#000;left:722.80px;top:190.70px;width:21.20px;height:13.00px;line-height:13.00px;text-align:center;">8</div>
<div class="t" style="font:10px 'Liberation Serif', serif;color:#000;left:744.00px;top:190.70px;width:22.60px;height:13.00px;line-height:13.00px;text-align:center;">T</div>
<div class="t" style="font:10px 'Liberation Serif', serif;color:#000;left:766.60px;top:190.70px;width:22.70px;height:13.00px;line-height:13.00px;text-align:center;">T</div>
<div class="t" style="font:10px 'Liberation Serif', serif;color:#000;left:789.30px;top:190.70px;width:23.00px;height:13.00px;line-height:13.00px;text-align:center;">T</div>
<div class="t" style="font:10px 'Liberation Serif', serif;color:#000;left:812.30px;top:190.70px;width:22.70px;height:13.00px;line-height:13.00px;text-align:center;">T</div>
<div class="t" style="font:10px 'Liberation Serif', serif;color:#000;left:835.00px;top:190.70px;width:22.70px;height:13.00px;line-height:13.00px;text-align:center;">T</div>
<div class="t" style="font:10px 'Liberation Serif', serif;color:#000;left:857.70px;top:190.70px;width:29.30px;height:13.00px;line-height:13.00px;text-align:center;">T</div>
<div class="t" style="font:10px 'Liberation Serif', serif;color:#000;left:887.00px;top:190.70px;width:28.60px;height:13.00px;line-height:13.00px;text-align:center;">T</div>
<div class="t" style="font:10px 'Liberation Serif', serif;color:#000;left:915.60px;top:190.70px;width:28.60px;height:13.00px;line-height:13.00px;text-align:center;">T</div>
<div class="t" style="font:10px 'Liberation Serif', serif;color:#000;left:944.20px;top:190.70px;width:23.00px;height:13.00px;line-height:13.00px;text-align:center;">T</div>
<div class="t" style="font:10px 'Liberation Serif', serif;color:#000;left:967.20px;top:190.70px;width:23.10px;height:13.00px;line-height:13.00px;text-align:center;">T</div>
<div class="t" style="font:10px 'Liberation Serif', serif;color:#000;left:990.30px;top:190.70px;width:22.60px;height:13.00px;line-height:13.00px;text-align:center;">T</div>
<div class="t" style="font:10px 'Liberation Serif', serif;color:#000;left:1012.90px;top:190.70px;width:22.90px;height:13.00px;line-height:13.00px;text-align:center;">T</div>
<div class="t" style="font:10px 'Liberation Serif', serif;color:#000;left:1075.00px;top:190.70px;width:19.80px;height:13.00px;line-height:13.00px;text-align:center;">x</div>
<div class="t" style="font:10px 'Liberation Serif', serif;color:#000;left:1135.80px;top:190.70px;width:21.60px;height:13.00px;line-height:13.00px;text-align:center;">x</div>
<div class="t" style="font:10px 'Liberation Serif', serif;color:#000;left:1157.40px;top:190.70px;width:21.00px;height:13.00px;line-height:13.00px;text-align:center;">x</div>
<div class="t" style="font:10px 'Liberation Serif', serif;color:#000;left:28.00px;top:208.93px;width:27.00px;height:13.00px;line-height:13.00px;text-align:center;">2</div>
<div class="t" style="font:10px 'Liberation Serif', serif;color:#000;left:58.50px;top:208.93px;height:13.00px;line-height:13.00px;">Trần Cao Nhật An</div>
<div class="t" style="font:10px 'Liberation Serif', serif;color:#000;left:182.00px;top:208.93px;width:69.00px;height:13.00px;line-height:13.00px;text-align:center;">29/10/2014</div>
<div class="t" style="font:10px 'Liberation Serif', serif;color:#000;left:278.00px;top:208.93px;width:21.00px;height:13.00px;line-height:13.00px;text-align:center;">T</div>
<div class="t" style="font:10px 'Liberation Serif', serif;color:#000;left:299.00px;top:208.93px;width:21.60px;height:13.00px;line-height:13.00px;text-align:center;">10</div>
<div class="t" style="font:10px 'Liberation Serif', serif;color:#000;left:320.60px;top:208.93px;width:21.00px;height:13.00px;line-height:13.00px;text-align:center;">T</div>
<div class="t" style="font:10px 'Liberation Serif', serif;color:#000;left:341.60px;top:208.93px;width:21.40px;height:13.00px;line-height:13.00px;text-align:center;">9</div>
<div class="t" style="font:10px 'Liberation Serif', serif;color:#000;left:363.00px;top:208.93px;width:35.00px;height:13.00px;line-height:13.00px;text-align:center;">T</div>
<div class="t" style="font:10px 'Liberation Serif', serif;color:#000;left:398.00px;top:208.93px;width:40.60px;height:13.00px;line-height:13.00px;text-align:center;">T</div>
<div class="t" style="font:10px 'Liberation Serif', serif;color:#000;left:438.60px;top:208.93px;width:45.90px;height:13.00px;line-height:13.00px;text-align:center;">T</div>
<div class="t" style="font:10px 'Liberation Serif', serif;color:#000;left:484.50px;top:208.93px;width:46.20px;height:13.00px;line-height:13.00px;text-align:center;">T</div>
<div class="t" style="font:10px 'Liberation Serif', serif;color:#000;left:530.70px;top:208.93px;width:35.20px;height:13.00px;line-height:13.00px;text-align:center;">T</div>
<div class="t" style="font:10px 'Liberation Serif', serif;color:#000;left:565.90px;top:208.93px;width:35.20px;height:13.00px;line-height:13.00px;text-align:center;">T</div>
<div class="t" style="font:10px 'Liberation Serif', serif;color:#000;left:601.10px;top:208.93px;width:28.70px;height:13.00px;line-height:13.00px;text-align:center;">H</div>
<div class="t" style="font:10px 'Liberation Serif', serif;color:#000;left:658.40px;top:208.93px;width:21.20px;height:13.00px;line-height:13.00px;text-align:center;">T</div>
<div class="t" style="font:10px 'Liberation Serif', serif;color:#000;left:701.00px;top:208.93px;width:21.80px;height:13.00px;line-height:13.00px;text-align:center;">T</div>
<div class="t" style="font:10px 'Liberation Serif', serif;color:#000;left:722.80px;top:208.93px;width:21.20px;height:13.00px;line-height:13.00px;text-align:center;">8</div>
<div class="t" style="font:10px 'Liberation Serif', serif;color:#000;left:744.00px;top:208.93px;width:22.60px;height:13.00px;line-height:13.00px;text-align:center;">T</div>
<div class="t" style="font:10px 'Liberation Serif', serif;color:#000;left:766.60px;top:208.93px;width:22.70px;height:13.00px;line-height:13.00px;text-align:center;">T</div>
<div class="t" style="font:10px 'Liberation Serif', serif;color:#000;left:789.30px;top:208.93px;width:23.00px;height:13.00px;line-height:13.00px;text-align:center;">T</div>
<div class="t" style="font:10px 'Liberation Serif', serif;color:#000;left:812.30px;top:208.93px;width:22.70px;height:13.00px;line-height:13.00px;text-align:center;">T</div>
<div class="t" style="font:10px 'Liberation Serif', serif;color:#000;left:835.00px;top:208.93px;width:22.70px;height:13.00px;line-height:13.00px;text-align:center;">T</div>
<div class="t" style="font:10px 'Liberation Serif', serif;color:#000;left:857.70px;top:208.93px;width:29.30px;height:13.00px;line-height:13.00px;text-align:center;">T</div>
<div class="t" style="font:10px 'Liberation Serif', serif;color:#000;left:887.00px;top:208.93px;width:28.60px;height:13.00px;line-height:13.00px;text-align:center;">T</div>
<div class="t" style="font:10px 'Liberation Serif', serif;color:#000;left:915.60px;top:208.93px;width:28.60px;height:13.00px;line-height:13.00px;text-align:center;">T</div>
<div class="t" style="font:10px 'Liberation Serif', serif;color:#000;left:944.20px;top:208.93px;width:23.00px;height:13.00px;line-height:13.00px;text-align:center;">T</div>
<div class="t" style="font:10px 'Liberation Serif', serif;color:#000;left:967.20px;top:208.93px;width:23.10px;height:13.00px;line-height:13.00px;text-align:center;">T</div>
<div class="t" style="font:10px 'Liberation Serif', serif;color:#000;left:990.30px;top:208.93px;width:22.60px;height:13.00px;line-height:13.00px;text-align:center;">T</div>
<div class="t" style="font:10px 'Liberation Serif', serif;color:#000;left:1012.90px;top:208.93px;width:22.90px;height:13.00px;line-height:13.00px;text-align:center;">T</div>
<div class="t" style="font:10px 'Liberation Serif', serif;color:#000;left:1075.00px;top:208.93px;width:19.80px;height:13.00px;line-height:13.00px;text-align:center;">x</div>
<div class="t" style="font:10px 'Liberation Serif', serif;color:#000;left:1157.40px;top:208.93px;width:21.00px;height:13.00px;line-height:13.00px;text-align:center;">x</div>
<div style="left:1179.40px;top:207.73px;width:45.90px;height:16px;overflow:hidden;"><div class="t" style="font:10px 'Liberation Serif', serif;color:#000;left:2px;top:2px;height:13px;line-height:13px;">Có thành tích</div></div>
<div class="t" style="font:10px 'Liberation Serif', serif;color:#000;text-decoration:line-through;text-decoration-thickness:1.3px;-webkit-text-stroke:0.2px #000;left:28.00px;top:227.16px;width:27.00px;height:13.00px;line-height:13.00px;text-align:center;">3</div>
<div class="t" style="font:10px 'Liberation Serif', serif;color:#000;text-decoration:line-through;text-decoration-thickness:1.3px;-webkit-text-stroke:0.2px #000;left:58.50px;top:227.16px;height:13.00px;line-height:13.00px;">Bùi Phan Như Anh</div>
<div class="t" style="font:10px 'Liberation Serif', serif;color:#000;text-decoration:line-through;text-decoration-thickness:1.3px;-webkit-text-stroke:0.2px #000;left:182.00px;top:227.16px;width:69.00px;height:13.00px;line-height:13.00px;text-align:center;">14/04/2014</div>
<div class="t" style="font:10px 'Liberation Serif', serif;color:#000;text-decoration:line-through;text-decoration-thickness:1.3px;-webkit-text-stroke:0.2px #000;left:251.00px;top:227.16px;width:27.00px;height:13.00px;line-height:13.00px;text-align:center;">x</div>
<div class="t" style="font:10px 'Liberation Serif', serif;color:#000;text-decoration:line-through;text-decoration-thickness:1.3px;-webkit-text-stroke:0.2px #000;left:278.00px;top:227.16px;width:21.00px;height:13.00px;line-height:13.00px;text-align:center;">H</div>
<div class="t" style="font:10px 'Liberation Serif', serif;color:#000;text-decoration:line-through;text-decoration-thickness:1.3px;-webkit-text-stroke:0.2px #000;left:1157.40px;top:227.16px;width:21.00px;height:13.00px;line-height:13.00px;text-align:center;">x</div>
<div class="t" style="font:10px 'Liberation Serif', serif;color:#000;text-decoration:line-through;text-decoration-thickness:1.3px;-webkit-text-stroke:0.2px #000;left:28.00px;top:245.39px;width:27.00px;height:13.00px;line-height:13.00px;text-align:center;">4</div>
<div class="t" style="font:10px 'Liberation Serif', serif;color:#000;text-decoration:line-through;text-decoration-thickness:1.3px;-webkit-text-stroke:0.2px #000;left:58.50px;top:245.39px;height:13.00px;line-height:13.00px;">Vũ Hà Anh</div>
<div class="t" style="font:10px 'Liberation Serif', serif;color:#000;text-decoration:line-through;text-decoration-thickness:1.3px;-webkit-text-stroke:0.2px #000;left:182.00px;top:245.39px;width:69.00px;height:13.00px;line-height:13.00px;text-align:center;">24/05/2014</div>
<div class="t" style="font:10px 'Liberation Serif', serif;color:#000;text-decoration:line-through;text-decoration-thickness:1.3px;-webkit-text-stroke:0.2px #000;left:251.00px;top:245.39px;width:27.00px;height:13.00px;line-height:13.00px;text-align:center;">x</div>
<div class="t" style="font:10px 'Liberation Serif', serif;color:#000;text-decoration:line-through;text-decoration-thickness:1.3px;-webkit-text-stroke:0.2px #000;left:1157.40px;top:245.39px;width:21.00px;height:13.00px;line-height:13.00px;text-align:center;">x</div>
<div class="t" style="font:10px 'Liberation Serif', serif;color:#000;left:28.00px;top:263.62px;width:27.00px;height:13.00px;line-height:13.00px;text-align:center;">5</div>
<div class="t" style="font:10px 'Liberation Serif', serif;color:#000;left:58.50px;top:263.62px;height:13.00px;line-height:13.00px;">Nguyễn Thái Bảo</div>
<div class="t" style="font:10px 'Liberation Serif', serif;color:#000;left:182.00px;top:263.62px;width:69.00px;height:13.00px;line-height:13.00px;text-align:center;">10/12/2014</div>
<div class="t" style="font:10px 'Liberation Serif', serif;color:#000;left:278.00px;top:263.62px;width:21.00px;height:13.00px;line-height:13.00px;text-align:center;">T</div>
<div class="t" style="font:10px 'Liberation Serif', serif;color:#000;left:299.00px;top:263.62px;width:21.60px;height:13.00px;line-height:13.00px;text-align:center;">8</div>
<div class="t" style="font:10px 'Liberation Serif', serif;color:#000;left:320.60px;top:263.62px;width:21.00px;height:13.00px;line-height:13.00px;text-align:center;">T</div>
<div class="t" style="font:10px 'Liberation Serif', serif;color:#000;left:341.60px;top:263.62px;width:21.40px;height:13.00px;line-height:13.00px;text-align:center;">9</div>
<div class="t" style="font:10px 'Liberation Serif', serif;color:#000;left:363.00px;top:263.62px;width:35.00px;height:13.00px;line-height:13.00px;text-align:center;">T</div>
<div class="t" style="font:10px 'Liberation Serif', serif;color:#000;left:398.00px;top:263.62px;width:40.60px;height:13.00px;line-height:13.00px;text-align:center;">T</div>
<div class="t" style="font:10px 'Liberation Serif', serif;color:#000;left:438.60px;top:263.62px;width:45.90px;height:13.00px;line-height:13.00px;text-align:center;">T</div>
<div class="t" style="font:10px 'Liberation Serif', serif;color:#000;left:484.50px;top:263.62px;width:46.20px;height:13.00px;line-height:13.00px;text-align:center;">T</div>
<div class="t" style="font:10px 'Liberation Serif', serif;color:#000;left:530.70px;top:263.62px;width:35.20px;height:13.00px;line-height:13.00px;text-align:center;">T</div>
<div class="t" style="font:10px 'Liberation Serif', serif;color:#000;left:565.90px;top:263.62px;width:35.20px;height:13.00px;line-height:13.00px;text-align:center;">T</div>
<div class="t" style="font:10px 'Liberation Serif', serif;color:#000;left:601.10px;top:263.62px;width:28.70px;height:13.00px;line-height:13.00px;text-align:center;">T</div>
<div class="t" style="font:10px 'Liberation Serif', serif;color:#000;left:658.40px;top:263.62px;width:21.20px;height:13.00px;line-height:13.00px;text-align:center;">T</div>
<div class="t" style="font:10px 'Liberation Serif', serif;color:#000;left:701.00px;top:263.62px;width:21.80px;height:13.00px;line-height:13.00px;text-align:center;">T</div>
<div class="t" style="font:10px 'Liberation Serif', serif;color:#000;left:722.80px;top:263.62px;width:21.20px;height:13.00px;line-height:13.00px;text-align:center;">8</div>
<div class="t" style="font:10px 'Liberation Serif', serif;color:#000;left:744.00px;top:263.62px;width:22.60px;height:13.00px;line-height:13.00px;text-align:center;">T</div>
<div class="t" style="font:10px 'Liberation Serif', serif;color:#000;left:766.60px;top:263.62px;width:22.70px;height:13.00px;line-height:13.00px;text-align:center;">T</div>
<div class="t" style="font:10px 'Liberation Serif', serif;color:#000;left:789.30px;top:263.62px;width:23.00px;height:13.00px;line-height:13.00px;text-align:center;">T</div>
<div class="t" style="font:10px 'Liberation Serif', serif;color:#000;left:812.30px;top:263.62px;width:22.70px;height:13.00px;line-height:13.00px;text-align:center;">T</div>
<div class="t" style="font:10px 'Liberation Serif', serif;color:#000;left:835.00px;top:263.62px;width:22.70px;height:13.00px;line-height:13.00px;text-align:center;">T</div>
<div class="t" style="font:10px 'Liberation Serif', serif;color:#000;left:857.70px;top:263.62px;width:29.30px;height:13.00px;line-height:13.00px;text-align:center;">T</div>
<div class="t" style="font:10px 'Liberation Serif', serif;color:#000;left:887.00px;top:263.62px;width:28.60px;height:13.00px;line-height:13.00px;text-align:center;">T</div>
<div class="t" style="font:10px 'Liberation Serif', serif;color:#000;left:915.60px;top:263.62px;width:28.60px;height:13.00px;line-height:13.00px;text-align:center;">T</div>
<div class="t" style="font:10px 'Liberation Serif', serif;color:#000;left:944.20px;top:263.62px;width:23.00px;height:13.00px;line-height:13.00px;text-align:center;">T</div>
<div class="t" style="font:10px 'Liberation Serif', serif;color:#000;left:967.20px;top:263.62px;width:23.10px;height:13.00px;line-height:13.00px;text-align:center;">T</div>
<div class="t" style="font:10px 'Liberation Serif', serif;color:#000;left:990.30px;top:263.62px;width:22.60px;height:13.00px;line-height:13.00px;text-align:center;">T</div>
<div class="t" style="font:10px 'Liberation Serif', serif;color:#000;left:1012.90px;top:263.62px;width:22.90px;height:13.00px;line-height:13.00px;text-align:center;">T</div>
<div class="t" style="font:10px 'Liberation Serif', serif;color:#000;left:1055.60px;top:263.62px;width:19.40px;height:13.00px;line-height:13.00px;text-align:center;">x</div>
<div class="t" style="font:10px 'Liberation Serif', serif;color:#000;left:1157.40px;top:263.62px;width:21.00px;height:13.00px;line-height:13.00px;text-align:center;">x</div>
<div class="t" style="font:10px 'Liberation Serif', serif;color:#000;text-decoration:line-through;text-decoration-thickness:1.3px;-webkit-text-stroke:0.2px #000;left:28.00px;top:281.85px;width:27.00px;height:13.00px;line-height:13.00px;text-align:center;">6</div>
<div class="t" style="font:10px 'Liberation Serif', serif;color:#000;text-decoration:line-through;text-decoration-thickness:1.3px;-webkit-text-stroke:0.2px #000;left:58.50px;top:281.85px;height:13.00px;line-height:13.00px;">Võ Lê Gia Bảo</div>
<div class="t" style="font:10px 'Liberation Serif', serif;color:#000;text-decoration:line-through;text-decoration-thickness:1.3px;-webkit-text-stroke:0.2px #000;left:182.00px;top:281.85px;width:69.00px;height:13.00px;line-height:13.00px;text-align:center;">12/04/2014</div>
<div class="t" style="font:10px 'Liberation Serif', serif;color:#000;text-decoration:line-through;text-decoration-thickness:1.3px;-webkit-text-stroke:0.2px #000;left:1157.40px;top:281.85px;width:21.00px;height:13.00px;line-height:13.00px;text-align:center;">x</div>
<div class="t" style="font:10px 'Liberation Serif', serif;color:#000;left:28.00px;top:300.08px;width:27.00px;height:13.00px;line-height:13.00px;text-align:center;">7</div>
<div class="t" style="font:10px 'Liberation Serif', serif;color:#000;left:58.50px;top:300.08px;height:13.00px;line-height:13.00px;">Trần Khánh Bình</div>
<div class="t" style="font:10px 'Liberation Serif', serif;color:#000;left:182.00px;top:300.08px;width:69.00px;height:13.00px;line-height:13.00px;text-align:center;">24/11/2014</div>
<div class="t" style="font:10px 'Liberation Serif', serif;color:#000;left:278.00px;top:300.08px;width:21.00px;height:13.00px;line-height:13.00px;text-align:center;">T</div>
<div class="t" style="font:10px 'Liberation Serif', serif;color:#000;left:299.00px;top:300.08px;width:21.60px;height:13.00px;line-height:13.00px;text-align:center;">8</div>
<div class="t" style="font:10px 'Liberation Serif', serif;color:#000;left:320.60px;top:300.08px;width:21.00px;height:13.00px;line-height:13.00px;text-align:center;">T</div>
<div class="t" style="font:10px 'Liberation Serif', serif;color:#000;left:341.60px;top:300.08px;width:21.40px;height:13.00px;line-height:13.00px;text-align:center;">7</div>
<div class="t" style="font:10px 'Liberation Serif', serif;color:#000;left:363.00px;top:300.08px;width:35.00px;height:13.00px;line-height:13.00px;text-align:center;">T</div>
<div class="t" style="font:10px 'Liberation Serif', serif;color:#000;left:398.00px;top:300.08px;width:40.60px;height:13.00px;line-height:13.00px;text-align:center;">T</div>
<div class="t" style="font:10px 'Liberation Serif', serif;color:#000;left:438.60px;top:300.08px;width:45.90px;height:13.00px;line-height:13.00px;text-align:center;">T</div>
<div class="t" style="font:10px 'Liberation Serif', serif;color:#000;left:484.50px;top:300.08px;width:46.20px;height:13.00px;line-height:13.00px;text-align:center;">T</div>
<div class="t" style="font:10px 'Liberation Serif', serif;color:#000;left:530.70px;top:300.08px;width:35.20px;height:13.00px;line-height:13.00px;text-align:center;">T</div>
<div class="t" style="font:10px 'Liberation Serif', serif;color:#000;left:565.90px;top:300.08px;width:35.20px;height:13.00px;line-height:13.00px;text-align:center;">T</div>
<div class="t" style="font:10px 'Liberation Serif', serif;color:#000;left:601.10px;top:300.08px;width:28.70px;height:13.00px;line-height:13.00px;text-align:center;">T</div>
<div class="t" style="font:10px 'Liberation Serif', serif;color:#000;left:658.40px;top:300.08px;width:21.20px;height:13.00px;line-height:13.00px;text-align:center;">T</div>
<div class="t" style="font:10px 'Liberation Serif', serif;color:#000;left:701.00px;top:300.08px;width:21.80px;height:13.00px;line-height:13.00px;text-align:center;">T</div>
<div class="t" style="font:10px 'Liberation Serif', serif;color:#000;left:722.80px;top:300.08px;width:21.20px;height:13.00px;line-height:13.00px;text-align:center;">8</div>
<div class="t" style="font:10px 'Liberation Serif', serif;color:#000;left:744.00px;top:300.08px;width:22.60px;height:13.00px;line-height:13.00px;text-align:center;">T</div>
<div class="t" style="font:10px 'Liberation Serif', serif;color:#000;left:766.60px;top:300.08px;width:22.70px;height:13.00px;line-height:13.00px;text-align:center;">T</div>
<div class="t" style="font:10px 'Liberation Serif', serif;color:#000;left:789.30px;top:300.08px;width:23.00px;height:13.00px;line-height:13.00px;text-align:center;">T</div>
<div class="t" style="font:10px 'Liberation Serif', serif;color:#000;left:812.30px;top:300.08px;width:22.70px;height:13.00px;line-height:13.00px;text-align:center;">T</div>
<div class="t" style="font:10px 'Liberation Serif', serif;color:#000;left:835.00px;top:300.08px;width:22.70px;height:13.00px;line-height:13.00px;text-align:center;">T</div>
<div class="t" style="font:10px 'Liberation Serif', serif;color:#000;left:857.70px;top:300.08px;width:29.30px;height:13.00px;line-height:13.00px;text-align:center;">T</div>
<div class="t" style="font:10px 'Liberation Serif', serif;color:#000;left:887.00px;top:300.08px;width:28.60px;height:13.00px;line-height:13.00px;text-align:center;">T</div>
<div class="t" style="font:10px 'Liberation Serif', serif;color:#000;left:915.60px;top:300.08px;width:28.60px;height:13.00px;line-height:13.00px;text-align:center;">T</div>
<div class="t" style="font:10px 'Liberation Serif', serif;color:#000;left:944.20px;top:300.08px;width:23.00px;height:13.00px;line-height:13.00px;text-align:center;">T</div>
<div class="t" style="font:10px 'Liberation Serif', serif;color:#000;left:967.20px;top:300.08px;width:23.10px;height:13.00px;line-height:13.00px;text-align:center;">T</div>
<div class="t" style="font:10px 'Liberation Serif', serif;color:#000;left:990.30px;top:300.08px;width:22.60px;height:13.00px;line-height:13.00px;text-align:center;">T</div>
<div class="t" style="font:10px 'Liberation Serif', serif;color:#000;left:1012.90px;top:300.08px;width:22.90px;height:13.00px;line-height:13.00px;text-align:center;">T</div>
<div class="t" style="font:10px 'Liberation Serif', serif;color:#000;left:1055.60px;top:300.08px;width:19.40px;height:13.00px;line-height:13.00px;text-align:center;">x</div>
<div class="t" style="font:10px 'Liberation Serif', serif;color:#000;left:1157.40px;top:300.08px;width:21.00px;height:13.00px;line-height:13.00px;text-align:center;">x</div>
<div class="t" style="font:10px 'Liberation Serif', serif;color:#000;text-decoration:line-through;text-decoration-thickness:1.3px;-webkit-text-stroke:0.2px #000;left:28.00px;top:318.31px;width:27.00px;height:13.00px;line-height:13.00px;text-align:center;">8</div>
<div class="t" style="font:10px 'Liberation Serif', serif;color:#000;text-decoration:line-through;text-decoration-thickness:1.3px;-webkit-text-stroke:0.2px #000;left:58.50px;top:318.31px;height:13.00px;line-height:13.00px;">Phạm Thủy Điệp</div>
<div class="t" style="font:10px 'Liberation Serif', serif;color:#000;text-decoration:line-through;text-decoration-thickness:1.3px;-webkit-text-stroke:0.2px #000;left:182.00px;top:318.31px;width:69.00px;height:13.00px;line-height:13.00px;text-align:center;">18/01/2014</div>
<div class="t" style="font:10px 'Liberation Serif', serif;color:#000;text-decoration:line-through;text-decoration-thickness:1.3px;-webkit-text-stroke:0.2px #000;left:251.00px;top:318.31px;width:27.00px;height:13.00px;line-height:13.00px;text-align:center;">x</div>
<div class="t" style="font:10px 'Liberation Serif', serif;color:#000;text-decoration:line-through;text-decoration-thickness:1.3px;-webkit-text-stroke:0.2px #000;left:1157.40px;top:318.31px;width:21.00px;height:13.00px;line-height:13.00px;text-align:center;">x</div>
<div class="t" style="font:10px 'Liberation Serif', serif;color:#000;text-decoration:line-through;text-decoration-thickness:1.3px;-webkit-text-stroke:0.2px #000;left:28.00px;top:336.54px;width:27.00px;height:13.00px;line-height:13.00px;text-align:center;">9</div>
<div class="t" style="font:10px 'Liberation Serif', serif;color:#000;text-decoration:line-through;text-decoration-thickness:1.3px;-webkit-text-stroke:0.2px #000;left:58.50px;top:336.54px;height:13.00px;line-height:13.00px;">Trần Thị Mộ Duyên</div>
<div class="t" style="font:10px 'Liberation Serif', serif;color:#000;text-decoration:line-through;text-decoration-thickness:1.3px;-webkit-text-stroke:0.2px #000;left:182.00px;top:336.54px;width:69.00px;height:13.00px;line-height:13.00px;text-align:center;">27/11/2014</div>
<div class="t" style="font:10px 'Liberation Serif', serif;color:#000;text-decoration:line-through;text-decoration-thickness:1.3px;-webkit-text-stroke:0.2px #000;left:251.00px;top:336.54px;width:27.00px;height:13.00px;line-height:13.00px;text-align:center;">x</div>
<div class="t" style="font:10px 'Liberation Serif', serif;color:#000;text-decoration:line-through;text-decoration-thickness:1.3px;-webkit-text-stroke:0.2px #000;left:1157.40px;top:336.54px;width:21.00px;height:13.00px;line-height:13.00px;text-align:center;">x</div>
<div class="t" style="font:10px 'Liberation Serif', serif;color:#000;left:28.00px;top:354.77px;width:27.00px;height:13.00px;line-height:13.00px;text-align:center;">10</div>
<div class="t" style="font:10px 'Liberation Serif', serif;color:#000;left:58.50px;top:354.77px;height:13.00px;line-height:13.00px;">Đặng Thùy Dương</div>
<div class="t" style="font:10px 'Liberation Serif', serif;color:#000;left:182.00px;top:354.77px;width:69.00px;height:13.00px;line-height:13.00px;text-align:center;">13/04/2014</div>
<div class="t" style="font:10px 'Liberation Serif', serif;color:#000;left:251.00px;top:354.77px;width:27.00px;height:13.00px;line-height:13.00px;text-align:center;">x</div>
<div class="t" style="font:10px 'Liberation Serif', serif;color:#000;left:278.00px;top:354.77px;width:21.00px;height:13.00px;line-height:13.00px;text-align:center;">T</div>
<div class="t" style="font:10px 'Liberation Serif', serif;color:#000;left:299.00px;top:354.77px;width:21.60px;height:13.00px;line-height:13.00px;text-align:center;">10</div>
<div class="t" style="font:10px 'Liberation Serif', serif;color:#000;left:320.60px;top:354.77px;width:21.00px;height:13.00px;line-height:13.00px;text-align:center;">T</div>
<div class="t" style="font:10px 'Liberation Serif', serif;color:#000;left:341.60px;top:354.77px;width:21.40px;height:13.00px;line-height:13.00px;text-align:center;">9</div>
<div class="t" style="font:10px 'Liberation Serif', serif;color:#000;left:363.00px;top:354.77px;width:35.00px;height:13.00px;line-height:13.00px;text-align:center;">H</div>
<div class="t" style="font:10px 'Liberation Serif', serif;color:#000;left:398.00px;top:354.77px;width:40.60px;height:13.00px;line-height:13.00px;text-align:center;">T</div>
<div class="t" style="font:10px 'Liberation Serif', serif;color:#000;left:438.60px;top:354.77px;width:45.90px;height:13.00px;line-height:13.00px;text-align:center;">T</div>
<div class="t" style="font:10px 'Liberation Serif', serif;color:#000;left:484.50px;top:354.77px;width:46.20px;height:13.00px;line-height:13.00px;text-align:center;">T</div>
<div class="t" style="font:10px 'Liberation Serif', serif;color:#000;left:530.70px;top:354.77px;width:35.20px;height:13.00px;line-height:13.00px;text-align:center;">T</div>
<div class="t" style="font:10px 'Liberation Serif', serif;color:#000;left:565.90px;top:354.77px;width:35.20px;height:13.00px;line-height:13.00px;text-align:center;">T</div>
<div class="t" style="font:10px 'Liberation Serif', serif;color:#000;left:601.10px;top:354.77px;width:28.70px;height:13.00px;line-height:13.00px;text-align:center;">T</div>
<div class="t" style="font:10px 'Liberation Serif', serif;color:#000;left:658.40px;top:354.77px;width:21.20px;height:13.00px;line-height:13.00px;text-align:center;">T</div>
<div class="t" style="font:10px 'Liberation Serif', serif;color:#000;left:701.00px;top:354.77px;width:21.80px;height:13.00px;line-height:13.00px;text-align:center;">T</div>
<div class="t" style="font:10px 'Liberation Serif', serif;color:#000;left:722.80px;top:354.77px;width:21.20px;height:13.00px;line-height:13.00px;text-align:center;">8</div>
<div class="t" style="font:10px 'Liberation Serif', serif;color:#000;left:744.00px;top:354.77px;width:22.60px;height:13.00px;line-height:13.00px;text-align:center;">T</div>
<div class="t" style="font:10px 'Liberation Serif', serif;color:#000;left:766.60px;top:354.77px;width:22.70px;height:13.00px;line-height:13.00px;text-align:center;">T</div>
<div class="t" style="font:10px 'Liberation Serif', serif;color:#000;left:789.30px;top:354.77px;width:23.00px;height:13.00px;line-height:13.00px;text-align:center;">T</div>
<div class="t" style="font:10px 'Liberation Serif', serif;color:#000;left:812.30px;top:354.77px;width:22.70px;height:13.00px;line-height:13.00px;text-align:center;">T</div>
<div class="t" style="font:10px 'Liberation Serif', serif;color:#000;left:835.00px;top:354.77px;width:22.70px;height:13.00px;line-height:13.00px;text-align:center;">T</div>
<div class="t" style="font:10px 'Liberation Serif', serif;color:#000;left:857.70px;top:354.77px;width:29.30px;height:13.00px;line-height:13.00px;text-align:center;">T</div>
<div class="t" style="font:10px 'Liberation Serif', serif;color:#000;left:887.00px;top:354.77px;width:28.60px;height:13.00px;line-height:13.00px;text-align:center;">T</div>
<div class="t" style="font:10px 'Liberation Serif', serif;color:#000;left:915.60px;top:354.77px;width:28.60px;height:13.00px;line-height:13.00px;text-align:center;">T</div>
<div class="t" style="font:10px 'Liberation Serif', serif;color:#000;left:944.20px;top:354.77px;width:23.00px;height:13.00px;line-height:13.00px;text-align:center;">T</div>
<div class="t" style="font:10px 'Liberation Serif', serif;color:#000;left:967.20px;top:354.77px;width:23.10px;height:13.00px;line-height:13.00px;text-align:center;">T</div>
<div class="t" style="font:10px 'Liberation Serif', serif;color:#000;left:990.30px;top:354.77px;width:22.60px;height:13.00px;line-height:13.00px;text-align:center;">T</div>
<div class="t" style="font:10px 'Liberation Serif', serif;color:#000;left:1012.90px;top:354.77px;width:22.90px;height:13.00px;line-height:13.00px;text-align:center;">T</div>
<div class="t" style="font:10px 'Liberation Serif', serif;color:#000;left:1075.00px;top:354.77px;width:19.80px;height:13.00px;line-height:13.00px;text-align:center;">x</div>
<div class="t" style="font:10px 'Liberation Serif', serif;color:#000;left:1157.40px;top:354.77px;width:21.00px;height:13.00px;line-height:13.00px;text-align:center;">x</div>
<div class="t" style="font:10px 'Liberation Serif', serif;color:#000;left:28.00px;top:373.00px;width:27.00px;height:13.00px;line-height:13.00px;text-align:center;">11</div>
<div class="t" style="font:10px 'Liberation Serif', serif;color:#000;left:58.50px;top:373.00px;height:13.00px;line-height:13.00px;">Nguyễn Thụy Thùy Dương</div>
<div class="t" style="font:10px 'Liberation Serif', serif;color:#000;left:182.00px;top:373.00px;width:69.00px;height:13.00px;line-height:13.00px;text-align:center;">20/02/2014</div>
<div class="t" style="font:10px 'Liberation Serif', serif;color:#000;left:251.00px;top:373.00px;width:27.00px;height:13.00px;line-height:13.00px;text-align:center;">x</div>
<div class="t" style="font:10px 'Liberation Serif', serif;color:#000;left:278.00px;top:373.00px;width:21.00px;height:13.00px;line-height:13.00px;text-align:center;">T</div>
<div class="t" style="font:10px 'Liberation Serif', serif;color:#000;left:299.00px;top:373.00px;width:21.60px;height:13.00px;line-height:13.00px;text-align:center;">8</div>
<div class="t" style="font:10px 'Liberation Serif', serif;color:#000;left:320.60px;top:373.00px;width:21.00px;height:13.00px;line-height:13.00px;text-align:center;">T</div>
<div class="t" style="font:10px 'Liberation Serif', serif;color:#000;left:341.60px;top:373.00px;width:21.40px;height:13.00px;line-height:13.00px;text-align:center;">9</div>
<div class="t" style="font:10px 'Liberation Serif', serif;color:#000;left:363.00px;top:373.00px;width:35.00px;height:13.00px;line-height:13.00px;text-align:center;">T</div>
<div class="t" style="font:10px 'Liberation Serif', serif;color:#000;left:398.00px;top:373.00px;width:40.60px;height:13.00px;line-height:13.00px;text-align:center;">T</div>
<div class="t" style="font:10px 'Liberation Serif', serif;color:#000;left:438.60px;top:373.00px;width:45.90px;height:13.00px;line-height:13.00px;text-align:center;">T</div>
<div class="t" style="font:10px 'Liberation Serif', serif;color:#000;left:484.50px;top:373.00px;width:46.20px;height:13.00px;line-height:13.00px;text-align:center;">T</div>
<div class="t" style="font:10px 'Liberation Serif', serif;color:#000;left:530.70px;top:373.00px;width:35.20px;height:13.00px;line-height:13.00px;text-align:center;">T</div>
<div class="t" style="font:10px 'Liberation Serif', serif;color:#000;left:565.90px;top:373.00px;width:35.20px;height:13.00px;line-height:13.00px;text-align:center;">T</div>
<div class="t" style="font:10px 'Liberation Serif', serif;color:#000;left:601.10px;top:373.00px;width:28.70px;height:13.00px;line-height:13.00px;text-align:center;">T</div>
<div class="t" style="font:10px 'Liberation Serif', serif;color:#000;left:658.40px;top:373.00px;width:21.20px;height:13.00px;line-height:13.00px;text-align:center;">T</div>
<div class="t" style="font:10px 'Liberation Serif', serif;color:#000;left:701.00px;top:373.00px;width:21.80px;height:13.00px;line-height:13.00px;text-align:center;">T</div>
<div class="t" style="font:10px 'Liberation Serif', serif;color:#000;left:722.80px;top:373.00px;width:21.20px;height:13.00px;line-height:13.00px;text-align:center;">8</div>
<div class="t" style="font:10px 'Liberation Serif', serif;color:#000;left:744.00px;top:373.00px;width:22.60px;height:13.00px;line-height:13.00px;text-align:center;">Đ</div>
<div class="t" style="font:10px 'Liberation Serif', serif;color:#000;left:766.60px;top:373.00px;width:22.70px;height:13.00px;line-height:13.00px;text-align:center;">T</div>
<div class="t" style="font:10px 'Liberation Serif', serif;color:#000;left:789.30px;top:373.00px;width:23.00px;height:13.00px;line-height:13.00px;text-align:center;">T</div>
<div class="t" style="font:10px 'Liberation Serif', serif;color:#000;left:812.30px;top:373.00px;width:22.70px;height:13.00px;line-height:13.00px;text-align:center;">T</div>
<div class="t" style="font:10px 'Liberation Serif', serif;color:#000;left:835.00px;top:373.00px;width:22.70px;height:13.00px;line-height:13.00px;text-align:center;">T</div>
<div class="t" style="font:10px 'Liberation Serif', serif;color:#000;left:857.70px;top:373.00px;width:29.30px;height:13.00px;line-height:13.00px;text-align:center;">T</div>
<div class="t" style="font:10px 'Liberation Serif', serif;color:#000;left:887.00px;top:373.00px;width:28.60px;height:13.00px;line-height:13.00px;text-align:center;">T</div>
<div class="t" style="font:10px 'Liberation Serif', serif;color:#000;left:915.60px;top:373.00px;width:28.60px;height:13.00px;line-height:13.00px;text-align:center;">T</div>
<div class="t" style="font:10px 'Liberation Serif', serif;color:#000;left:944.20px;top:373.00px;width:23.00px;height:13.00px;line-height:13.00px;text-align:center;">T</div>
<div class="t" style="font:10px 'Liberation Serif', serif;color:#000;left:967.20px;top:373.00px;width:23.10px;height:13.00px;line-height:13.00px;text-align:center;">T</div>
<div class="t" style="font:10px 'Liberation Serif', serif;color:#000;left:990.30px;top:373.00px;width:22.60px;height:13.00px;line-height:13.00px;text-align:center;">T</div>
<div class="t" style="font:10px 'Liberation Serif', serif;color:#000;left:1012.90px;top:373.00px;width:22.90px;height:13.00px;line-height:13.00px;text-align:center;">T</div>
<div class="t" style="font:10px 'Liberation Serif', serif;color:#000;left:1075.00px;top:373.00px;width:19.80px;height:13.00px;line-height:13.00px;text-align:center;">x</div>
<div class="t" style="font:10px 'Liberation Serif', serif;color:#000;left:1157.40px;top:373.00px;width:21.00px;height:13.00px;line-height:13.00px;text-align:center;">x</div>
<div class="t" style="font:10px 'Liberation Serif', serif;color:#000;text-decoration:line-through;text-decoration-thickness:1.3px;-webkit-text-stroke:0.2px #000;left:28.00px;top:391.23px;width:27.00px;height:13.00px;line-height:13.00px;text-align:center;">12</div>
<div class="t" style="font:10px 'Liberation Serif', serif;color:#000;text-decoration:line-through;text-decoration-thickness:1.3px;-webkit-text-stroke:0.2px #000;left:58.50px;top:391.23px;height:13.00px;line-height:13.00px;">Trần Quang Đạt</div>
<div class="t" style="font:10px 'Liberation Serif', serif;color:#000;text-decoration:line-through;text-decoration-thickness:1.3px;-webkit-text-stroke:0.2px #000;left:182.00px;top:391.23px;width:69.00px;height:13.00px;line-height:13.00px;text-align:center;">29/01/2014</div>
<div class="t" style="font:10px 'Liberation Serif', serif;color:#000;text-decoration:line-through;text-decoration-thickness:1.3px;-webkit-text-stroke:0.2px #000;left:1157.40px;top:391.23px;width:21.00px;height:13.00px;line-height:13.00px;text-align:center;">x</div>
<div class="t" style="font:10px 'Liberation Serif', serif;color:#000;text-decoration:line-through;text-decoration-thickness:1.3px;-webkit-text-stroke:0.2px #000;left:28.00px;top:409.46px;width:27.00px;height:13.00px;line-height:13.00px;text-align:center;">13</div>
<div class="t" style="font:10px 'Liberation Serif', serif;color:#000;text-decoration:line-through;text-decoration-thickness:1.3px;-webkit-text-stroke:0.2px #000;left:58.50px;top:409.46px;height:13.00px;line-height:13.00px;">Nguyễn Thị Mỹ Hạnh</div>
<div class="t" style="font:10px 'Liberation Serif', serif;color:#000;text-decoration:line-through;text-decoration-thickness:1.3px;-webkit-text-stroke:0.2px #000;left:182.00px;top:409.46px;width:69.00px;height:13.00px;line-height:13.00px;text-align:center;">17/12/2014</div>
<div class="t" style="font:10px 'Liberation Serif', serif;color:#000;text-decoration:line-through;text-decoration-thickness:1.3px;-webkit-text-stroke:0.2px #000;left:251.00px;top:409.46px;width:27.00px;height:13.00px;line-height:13.00px;text-align:center;">x</div>
<div class="t" style="font:10px 'Liberation Serif', serif;color:#000;text-decoration:line-through;text-decoration-thickness:1.3px;-webkit-text-stroke:0.2px #000;left:1157.40px;top:409.46px;width:21.00px;height:13.00px;line-height:13.00px;text-align:center;">x</div>
<div class="t" style="font:10px 'Liberation Serif', serif;color:#000;left:28.00px;top:427.69px;width:27.00px;height:13.00px;line-height:13.00px;text-align:center;">14</div>
<div class="t" style="font:10px 'Liberation Serif', serif;color:#000;left:58.50px;top:427.69px;height:13.00px;line-height:13.00px;">Huỳnh Gia Hạo</div>
<div class="t" style="font:10px 'Liberation Serif', serif;color:#000;left:182.00px;top:427.69px;width:69.00px;height:13.00px;line-height:13.00px;text-align:center;">29/04/2014</div>
<div class="t" style="font:10px 'Liberation Serif', serif;color:#000;left:278.00px;top:427.69px;width:21.00px;height:13.00px;line-height:13.00px;text-align:center;">T</div>
<div class="t" style="font:10px 'Liberation Serif', serif;color:#000;left:299.00px;top:427.69px;width:21.60px;height:13.00px;line-height:13.00px;text-align:center;">6</div>
<div class="t" style="font:10px 'Liberation Serif', serif;color:#000;left:320.60px;top:427.69px;width:21.00px;height:13.00px;line-height:13.00px;text-align:center;">T</div>
<div class="t" style="font:10px 'Liberation Serif', serif;color:#000;left:341.60px;top:427.69px;width:21.40px;height:13.00px;line-height:13.00px;text-align:center;">9</div>
<div class="t" style="font:10px 'Liberation Serif', serif;color:#000;left:363.00px;top:427.69px;width:35.00px;height:13.00px;line-height:13.00px;text-align:center;">T</div>
<div class="t" style="font:10px 'Liberation Serif', serif;color:#000;left:398.00px;top:427.69px;width:40.60px;height:13.00px;line-height:13.00px;text-align:center;">T</div>
<div class="t" style="font:10px 'Liberation Serif', serif;color:#000;left:438.60px;top:427.69px;width:45.90px;height:13.00px;line-height:13.00px;text-align:center;">T</div>
<div class="t" style="font:10px 'Liberation Serif', serif;color:#000;left:484.50px;top:427.69px;width:46.20px;height:13.00px;line-height:13.00px;text-align:center;">T</div>
<div class="t" style="font:10px 'Liberation Serif', serif;color:#000;left:530.70px;top:427.69px;width:35.20px;height:13.00px;line-height:13.00px;text-align:center;">T</div>
<div class="t" style="font:10px 'Liberation Serif', serif;color:#000;left:565.90px;top:427.69px;width:35.20px;height:13.00px;line-height:13.00px;text-align:center;">T</div>
<div class="t" style="font:10px 'Liberation Serif', serif;color:#000;left:601.10px;top:427.69px;width:28.70px;height:13.00px;line-height:13.00px;text-align:center;">T</div>
<div class="t" style="font:10px 'Liberation Serif', serif;color:#000;left:658.40px;top:427.69px;width:21.20px;height:13.00px;line-height:13.00px;text-align:center;">T</div>
<div class="t" style="font:10px 'Liberation Serif', serif;color:#000;left:701.00px;top:427.69px;width:21.80px;height:13.00px;line-height:13.00px;text-align:center;">T</div>
<div class="t" style="font:10px 'Liberation Serif', serif;color:#000;left:722.80px;top:427.69px;width:21.20px;height:13.00px;line-height:13.00px;text-align:center;">8</div>
<div class="t" style="font:10px 'Liberation Serif', serif;color:#000;left:744.00px;top:427.69px;width:22.60px;height:13.00px;line-height:13.00px;text-align:center;">T</div>
<div class="t" style="font:10px 'Liberation Serif', serif;color:#000;left:766.60px;top:427.69px;width:22.70px;height:13.00px;line-height:13.00px;text-align:center;">T</div>
<div class="t" style="font:10px 'Liberation Serif', serif;color:#000;left:789.30px;top:427.69px;width:23.00px;height:13.00px;line-height:13.00px;text-align:center;">T</div>
<div class="t" style="font:10px 'Liberation Serif', serif;color:#000;left:812.30px;top:427.69px;width:22.70px;height:13.00px;line-height:13.00px;text-align:center;">T</div>
<div class="t" style="font:10px 'Liberation Serif', serif;color:#000;left:835.00px;top:427.69px;width:22.70px;height:13.00px;line-height:13.00px;text-align:center;">T</div>
<div class="t" style="font:10px 'Liberation Serif', serif;color:#000;left:857.70px;top:427.69px;width:29.30px;height:13.00px;line-height:13.00px;text-align:center;">T</div>
<div class="t" style="font:10px 'Liberation Serif', serif;color:#000;left:887.00px;top:427.69px;width:28.60px;height:13.00px;line-height:13.00px;text-align:center;">T</div>
<div class="t" style="font:10px 'Liberation Serif', serif;color:#000;left:915.60px;top:427.69px;width:28.60px;height:13.00px;line-height:13.00px;text-align:center;">T</div>
<div class="t" style="font:10px 'Liberation Serif', serif;color:#000;left:944.20px;top:427.69px;width:23.00px;height:13.00px;line-height:13.00px;text-align:center;">T</div>
<div class="t" style="font:10px 'Liberation Serif', serif;color:#000;left:967.20px;top:427.69px;width:23.10px;height:13.00px;line-height:13.00px;text-align:center;">T</div>
<div class="t" style="font:10px 'Liberation Serif', serif;color:#000;left:990.30px;top:427.69px;width:22.60px;height:13.00px;line-height:13.00px;text-align:center;">T</div>
<div class="t" style="font:10px 'Liberation Serif', serif;color:#000;left:1012.90px;top:427.69px;width:22.90px;height:13.00px;line-height:13.00px;text-align:center;">T</div>
<div class="t" style="font:10px 'Liberation Serif', serif;color:#000;left:1075.00px;top:427.69px;width:19.80px;height:13.00px;line-height:13.00px;text-align:center;">x</div>
<div class="t" style="font:10px 'Liberation Serif', serif;color:#000;left:1157.40px;top:427.69px;width:21.00px;height:13.00px;line-height:13.00px;text-align:center;">x</div>
<div class="t" style="font:10px 'Liberation Serif', serif;color:#000;left:28.00px;top:445.92px;width:27.00px;height:13.00px;line-height:13.00px;text-align:center;">15</div>
<div class="t" style="font:10px 'Liberation Serif', serif;color:#000;left:58.50px;top:445.92px;height:13.00px;line-height:13.00px;">Hồ Gia Hưng</div>
<div class="t" style="font:10px 'Liberation Serif', serif;color:#000;left:182.00px;top:445.92px;width:69.00px;height:13.00px;line-height:13.00px;text-align:center;">13/08/2014</div>
<div class="t" style="font:10px 'Liberation Serif', serif;color:#000;left:278.00px;top:445.92px;width:21.00px;height:13.00px;line-height:13.00px;text-align:center;">T</div>
<div class="t" style="font:10px 'Liberation Serif', serif;color:#000;left:299.00px;top:445.92px;width:21.60px;height:13.00px;line-height:13.00px;text-align:center;">8</div>
<div class="t" style="font:10px 'Liberation Serif', serif;color:#000;left:320.60px;top:445.92px;width:21.00px;height:13.00px;line-height:13.00px;text-align:center;">C</div>
<div class="t" style="font:10px 'Liberation Serif', serif;color:#000;left:341.60px;top:445.92px;width:21.40px;height:13.00px;line-height:13.00px;text-align:center;">5</div>
<div class="t" style="font:10px 'Liberation Serif', serif;color:#000;left:363.00px;top:445.92px;width:35.00px;height:13.00px;line-height:13.00px;text-align:center;">T</div>
<div class="t" style="font:10px 'Liberation Serif', serif;color:#000;left:398.00px;top:445.92px;width:40.60px;height:13.00px;line-height:13.00px;text-align:center;">T</div>
<div class="t" style="font:10px 'Liberation Serif', serif;color:#000;left:438.60px;top:445.92px;width:45.90px;height:13.00px;line-height:13.00px;text-align:center;">T</div>
<div class="t" style="font:10px 'Liberation Serif', serif;color:#000;left:484.50px;top:445.92px;width:46.20px;height:13.00px;line-height:13.00px;text-align:center;">T</div>
<div class="t" style="font:10px 'Liberation Serif', serif;color:#000;left:530.70px;top:445.92px;width:35.20px;height:13.00px;line-height:13.00px;text-align:center;">T</div>
<div class="t" style="font:10px 'Liberation Serif', serif;color:#000;left:565.90px;top:445.92px;width:35.20px;height:13.00px;line-height:13.00px;text-align:center;">T</div>
<div class="t" style="font:10px 'Liberation Serif', serif;color:#000;left:601.10px;top:445.92px;width:28.70px;height:13.00px;line-height:13.00px;text-align:center;">T</div>
<div class="t" style="font:10px 'Liberation Serif', serif;color:#000;left:658.40px;top:445.92px;width:21.20px;height:13.00px;line-height:13.00px;text-align:center;">T</div>
<div class="t" style="font:10px 'Liberation Serif', serif;color:#000;left:701.00px;top:445.92px;width:21.80px;height:13.00px;line-height:13.00px;text-align:center;">T</div>
<div class="t" style="font:10px 'Liberation Serif', serif;color:#000;left:722.80px;top:445.92px;width:21.20px;height:13.00px;line-height:13.00px;text-align:center;">8</div>
<div class="t" style="font:10px 'Liberation Serif', serif;color:#000;left:744.00px;top:445.92px;width:22.60px;height:13.00px;line-height:13.00px;text-align:center;">T</div>
<div class="t" style="font:10px 'Liberation Serif', serif;color:#000;left:766.60px;top:445.92px;width:22.70px;height:13.00px;line-height:13.00px;text-align:center;">T</div>
<div class="t" style="font:10px 'Liberation Serif', serif;color:#000;left:789.30px;top:445.92px;width:23.00px;height:13.00px;line-height:13.00px;text-align:center;">T</div>
<div class="t" style="font:10px 'Liberation Serif', serif;color:#000;left:812.30px;top:445.92px;width:22.70px;height:13.00px;line-height:13.00px;text-align:center;">T</div>
<div class="t" style="font:10px 'Liberation Serif', serif;color:#000;left:835.00px;top:445.92px;width:22.70px;height:13.00px;line-height:13.00px;text-align:center;">T</div>
<div class="t" style="font:10px 'Liberation Serif', serif;color:#000;left:857.70px;top:445.92px;width:29.30px;height:13.00px;line-height:13.00px;text-align:center;">T</div>
<div class="t" style="font:10px 'Liberation Serif', serif;color:#000;left:887.00px;top:445.92px;width:28.60px;height:13.00px;line-height:13.00px;text-align:center;">T</div>
<div class="t" style="font:10px 'Liberation Serif', serif;color:#000;left:915.60px;top:445.92px;width:28.60px;height:13.00px;line-height:13.00px;text-align:center;">T</div>
<div class="t" style="font:10px 'Liberation Serif', serif;color:#000;left:944.20px;top:445.92px;width:23.00px;height:13.00px;line-height:13.00px;text-align:center;">T</div>
<div class="t" style="font:10px 'Liberation Serif', serif;color:#000;left:967.20px;top:445.92px;width:23.10px;height:13.00px;line-height:13.00px;text-align:center;">T</div>
<div class="t" style="font:10px 'Liberation Serif', serif;color:#000;left:990.30px;top:445.92px;width:22.60px;height:13.00px;line-height:13.00px;text-align:center;">T</div>
<div class="t" style="font:10px 'Liberation Serif', serif;color:#000;left:1012.90px;top:445.92px;width:22.90px;height:13.00px;line-height:13.00px;text-align:center;">T</div>
<div class="t" style="font:10px 'Liberation Serif', serif;color:#000;left:1094.80px;top:445.92px;width:19.90px;height:13.00px;line-height:13.00px;text-align:center;">x</div>
<div class="t" style="font:10px 'Liberation Serif', serif;color:#000;left:1157.40px;top:445.92px;width:21.00px;height:13.00px;line-height:13.00px;text-align:center;">x</div>
<div class="t" style="font:10px 'Liberation Serif', serif;color:#000;left:28.00px;top:464.15px;width:27.00px;height:13.00px;line-height:13.00px;text-align:center;">16</div>
<div class="t" style="font:10px 'Liberation Serif', serif;color:#000;left:58.50px;top:464.15px;height:13.00px;line-height:13.00px;">Nguyễn Lương Thiên Kim</div>
<div class="t" style="font:10px 'Liberation Serif', serif;color:#000;left:182.00px;top:464.15px;width:69.00px;height:13.00px;line-height:13.00px;text-align:center;">02/05/2014</div>
<div class="t" style="font:10px 'Liberation Serif', serif;color:#000;left:251.00px;top:464.15px;width:27.00px;height:13.00px;line-height:13.00px;text-align:center;">x</div>
<div class="t" style="font:10px 'Liberation Serif', serif;color:#000;left:278.00px;top:464.15px;width:21.00px;height:13.00px;line-height:13.00px;text-align:center;">T</div>
<div class="t" style="font:10px 'Liberation Serif', serif;color:#000;left:299.00px;top:464.15px;width:21.60px;height:13.00px;line-height:13.00px;text-align:center;">10</div>
<div class="t" style="font:10px 'Liberation Serif', serif;color:#000;left:320.60px;top:464.15px;width:21.00px;height:13.00px;line-height:13.00px;text-align:center;">T</div>
<div class="t" style="font:10px 'Liberation Serif', serif;color:#000;left:341.60px;top:464.15px;width:21.40px;height:13.00px;line-height:13.00px;text-align:center;">8</div>
<div class="t" style="font:10px 'Liberation Serif', serif;color:#000;left:363.00px;top:464.15px;width:35.00px;height:13.00px;line-height:13.00px;text-align:center;">T</div>
<div class="t" style="font:10px 'Liberation Serif', serif;color:#000;left:398.00px;top:464.15px;width:40.60px;height:13.00px;line-height:13.00px;text-align:center;">T</div>
<div class="t" style="font:10px 'Liberation Serif', serif;color:#000;left:438.60px;top:464.15px;width:45.90px;height:13.00px;line-height:13.00px;text-align:center;">T</div>
<div class="t" style="font:10px 'Liberation Serif', serif;color:#000;left:484.50px;top:464.15px;width:46.20px;height:13.00px;line-height:13.00px;text-align:center;">T</div>
<div class="t" style="font:10px 'Liberation Serif', serif;color:#000;left:530.70px;top:464.15px;width:35.20px;height:13.00px;line-height:13.00px;text-align:center;">T</div>
<div class="t" style="font:10px 'Liberation Serif', serif;color:#000;left:565.90px;top:464.15px;width:35.20px;height:13.00px;line-height:13.00px;text-align:center;">T</div>
<div class="t" style="font:10px 'Liberation Serif', serif;color:#000;left:601.10px;top:464.15px;width:28.70px;height:13.00px;line-height:13.00px;text-align:center;">T</div>
<div class="t" style="font:10px 'Liberation Serif', serif;color:#000;left:658.40px;top:464.15px;width:21.20px;height:13.00px;line-height:13.00px;text-align:center;">T</div>
<div class="t" style="font:10px 'Liberation Serif', serif;color:#000;left:701.00px;top:464.15px;width:21.80px;height:13.00px;line-height:13.00px;text-align:center;">T</div>
<div class="t" style="font:10px 'Liberation Serif', serif;color:#000;left:722.80px;top:464.15px;width:21.20px;height:13.00px;line-height:13.00px;text-align:center;">8</div>
<div class="t" style="font:10px 'Liberation Serif', serif;color:#000;left:744.00px;top:464.15px;width:22.60px;height:13.00px;line-height:13.00px;text-align:center;">T</div>
<div class="t" style="font:10px 'Liberation Serif', serif;color:#000;left:766.60px;top:464.15px;width:22.70px;height:13.00px;line-height:13.00px;text-align:center;">T</div>
<div class="t" style="font:10px 'Liberation Serif', serif;color:#000;left:789.30px;top:464.15px;width:23.00px;height:13.00px;line-height:13.00px;text-align:center;">T</div>
<div class="t" style="font:10px 'Liberation Serif', serif;color:#000;left:812.30px;top:464.15px;width:22.70px;height:13.00px;line-height:13.00px;text-align:center;">T</div>
<div class="t" style="font:10px 'Liberation Serif', serif;color:#000;left:835.00px;top:464.15px;width:22.70px;height:13.00px;line-height:13.00px;text-align:center;">T</div>
<div class="t" style="font:10px 'Liberation Serif', serif;color:#000;left:857.70px;top:464.15px;width:29.30px;height:13.00px;line-height:13.00px;text-align:center;">T</div>
<div class="t" style="font:10px 'Liberation Serif', serif;color:#000;left:887.00px;top:464.15px;width:28.60px;height:13.00px;line-height:13.00px;text-align:center;">T</div>
<div class="t" style="font:10px 'Liberation Serif', serif;color:#000;left:915.60px;top:464.15px;width:28.60px;height:13.00px;line-height:13.00px;text-align:center;">T</div>
<div class="t" style="font:10px 'Liberation Serif', serif;color:#000;left:944.20px;top:464.15px;width:23.00px;height:13.00px;line-height:13.00px;text-align:center;">T</div>
<div class="t" style="font:10px 'Liberation Serif', serif;color:#000;left:967.20px;top:464.15px;width:23.10px;height:13.00px;line-height:13.00px;text-align:center;">T</div>
<div class="t" style="font:10px 'Liberation Serif', serif;color:#000;left:990.30px;top:464.15px;width:22.60px;height:13.00px;line-height:13.00px;text-align:center;">T</div>
<div class="t" style="font:10px 'Liberation Serif', serif;color:#000;left:1012.90px;top:464.15px;width:22.90px;height:13.00px;line-height:13.00px;text-align:center;">T</div>
<div class="t" style="font:10px 'Liberation Serif', serif;color:#000;left:1055.60px;top:464.15px;width:19.40px;height:13.00px;line-height:13.00px;text-align:center;">x</div>
<div class="t" style="font:10px 'Liberation Serif', serif;color:#000;left:1157.40px;top:464.15px;width:21.00px;height:13.00px;line-height:13.00px;text-align:center;">x</div>
<div class="t" style="font:10px 'Liberation Serif', serif;color:#000;left:28.00px;top:482.38px;width:27.00px;height:13.00px;line-height:13.00px;text-align:center;">17</div>
<div class="t" style="font:10px 'Liberation Serif', serif;color:#000;left:58.50px;top:482.38px;height:13.00px;line-height:13.00px;">Đặng Minh Khoa</div>
<div class="t" style="font:10px 'Liberation Serif', serif;color:#000;left:182.00px;top:482.38px;width:69.00px;height:13.00px;line-height:13.00px;text-align:center;">23/10/2014</div>
<div class="t" style="font:10px 'Liberation Serif', serif;color:#000;left:278.00px;top:482.38px;width:21.00px;height:13.00px;line-height:13.00px;text-align:center;">T</div>
<div class="t" style="font:10px 'Liberation Serif', serif;color:#000;left:299.00px;top:482.38px;width:21.60px;height:13.00px;line-height:13.00px;text-align:center;">8</div>
<div class="t" style="font:10px 'Liberation Serif', serif;color:#000;left:320.60px;top:482.38px;width:21.00px;height:13.00px;line-height:13.00px;text-align:center;">T</div>
<div class="t" style="font:10px 'Liberation Serif', serif;color:#000;left:341.60px;top:482.38px;width:21.40px;height:13.00px;line-height:13.00px;text-align:center;">8</div>
<div class="t" style="font:10px 'Liberation Serif', serif;color:#000;left:363.00px;top:482.38px;width:35.00px;height:13.00px;line-height:13.00px;text-align:center;">T</div>
<div class="t" style="font:10px 'Liberation Serif', serif;color:#000;left:398.00px;top:482.38px;width:40.60px;height:13.00px;line-height:13.00px;text-align:center;">T</div>
<div class="t" style="font:10px 'Liberation Serif', serif;color:#000;left:438.60px;top:482.38px;width:45.90px;height:13.00px;line-height:13.00px;text-align:center;">T</div>
<div class="t" style="font:10px 'Liberation Serif', serif;color:#000;left:484.50px;top:482.38px;width:46.20px;height:13.00px;line-height:13.00px;text-align:center;">T</div>
<div class="t" style="font:10px 'Liberation Serif', serif;color:#000;left:530.70px;top:482.38px;width:35.20px;height:13.00px;line-height:13.00px;text-align:center;">T</div>
<div class="t" style="font:10px 'Liberation Serif', serif;color:#000;left:565.90px;top:482.38px;width:35.20px;height:13.00px;line-height:13.00px;text-align:center;">T</div>
<div class="t" style="font:10px 'Liberation Serif', serif;color:#000;left:601.10px;top:482.38px;width:28.70px;height:13.00px;line-height:13.00px;text-align:center;">T</div>
<div class="t" style="font:10px 'Liberation Serif', serif;color:#000;left:658.40px;top:482.38px;width:21.20px;height:13.00px;line-height:13.00px;text-align:center;">T</div>
<div class="t" style="font:10px 'Liberation Serif', serif;color:#000;left:701.00px;top:482.38px;width:21.80px;height:13.00px;line-height:13.00px;text-align:center;">T</div>
<div class="t" style="font:10px 'Liberation Serif', serif;color:#000;left:722.80px;top:482.38px;width:21.20px;height:13.00px;line-height:13.00px;text-align:center;">8</div>
<div class="t" style="font:10px 'Liberation Serif', serif;color:#000;left:744.00px;top:482.38px;width:22.60px;height:13.00px;line-height:13.00px;text-align:center;">T</div>
<div class="t" style="font:10px 'Liberation Serif', serif;color:#000;left:766.60px;top:482.38px;width:22.70px;height:13.00px;line-height:13.00px;text-align:center;">T</div>
<div class="t" style="font:10px 'Liberation Serif', serif;color:#000;left:789.30px;top:482.38px;width:23.00px;height:13.00px;line-height:13.00px;text-align:center;">T</div>
<div class="t" style="font:10px 'Liberation Serif', serif;color:#000;left:812.30px;top:482.38px;width:22.70px;height:13.00px;line-height:13.00px;text-align:center;">T</div>
<div class="t" style="font:10px 'Liberation Serif', serif;color:#000;left:835.00px;top:482.38px;width:22.70px;height:13.00px;line-height:13.00px;text-align:center;">T</div>
<div class="t" style="font:10px 'Liberation Serif', serif;color:#000;left:857.70px;top:482.38px;width:29.30px;height:13.00px;line-height:13.00px;text-align:center;">T</div>
<div class="t" style="font:10px 'Liberation Serif', serif;color:#000;left:887.00px;top:482.38px;width:28.60px;height:13.00px;line-height:13.00px;text-align:center;">T</div>
<div class="t" style="font:10px 'Liberation Serif', serif;color:#000;left:915.60px;top:482.38px;width:28.60px;height:13.00px;line-height:13.00px;text-align:center;">T</div>
<div class="t" style="font:10px 'Liberation Serif', serif;color:#000;left:944.20px;top:482.38px;width:23.00px;height:13.00px;line-height:13.00px;text-align:center;">T</div>
<div class="t" style="font:10px 'Liberation Serif', serif;color:#000;left:967.20px;top:482.38px;width:23.10px;height:13.00px;line-height:13.00px;text-align:center;">T</div>
<div class="t" style="font:10px 'Liberation Serif', serif;color:#000;left:990.30px;top:482.38px;width:22.60px;height:13.00px;line-height:13.00px;text-align:center;">T</div>
<div class="t" style="font:10px 'Liberation Serif', serif;color:#000;left:1012.90px;top:482.38px;width:22.90px;height:13.00px;line-height:13.00px;text-align:center;">T</div>
<div class="t" style="font:10px 'Liberation Serif', serif;color:#000;left:1055.60px;top:482.38px;width:19.40px;height:13.00px;line-height:13.00px;text-align:center;">x</div>
<div class="t" style="font:10px 'Liberation Serif', serif;color:#000;left:1157.40px;top:482.38px;width:21.00px;height:13.00px;line-height:13.00px;text-align:center;">x</div>
<div class="t" style="font:10px 'Liberation Serif', serif;color:#000;left:28.00px;top:500.61px;width:27.00px;height:13.00px;line-height:13.00px;text-align:center;">18</div>
<div class="t" style="font:10px 'Liberation Serif', serif;color:#000;left:58.50px;top:500.61px;height:13.00px;line-height:13.00px;">Nguyễn Trúc Linh</div>
<div class="t" style="font:10px 'Liberation Serif', serif;color:#000;left:182.00px;top:500.61px;width:69.00px;height:13.00px;line-height:13.00px;text-align:center;">16/08/2014</div>
<div class="t" style="font:10px 'Liberation Serif', serif;color:#000;left:251.00px;top:500.61px;width:27.00px;height:13.00px;line-height:13.00px;text-align:center;">x</div>
<div class="t" style="font:10px 'Liberation Serif', serif;color:#000;left:278.00px;top:500.61px;width:21.00px;height:13.00px;line-height:13.00px;text-align:center;">T</div>
<div class="t" style="font:10px 'Liberation Serif', serif;color:#000;left:299.00px;top:500.61px;width:21.60px;height:13.00px;line-height:13.00px;text-align:center;">8</div>
<div class="t" style="font:10px 'Liberation Serif', serif;color:#000;left:320.60px;top:500.61px;width:21.00px;height:13.00px;line-height:13.00px;text-align:center;">T</div>
<div class="t" style="font:10px 'Liberation Serif', serif;color:#000;left:341.60px;top:500.61px;width:21.40px;height:13.00px;line-height:13.00px;text-align:center;">8</div>
<div class="t" style="font:10px 'Liberation Serif', serif;color:#000;left:363.00px;top:500.61px;width:35.00px;height:13.00px;line-height:13.00px;text-align:center;">T</div>
<div class="t" style="font:10px 'Liberation Serif', serif;color:#000;left:398.00px;top:500.61px;width:40.60px;height:13.00px;line-height:13.00px;text-align:center;">T</div>
<div class="t" style="font:10px 'Liberation Serif', serif;color:#000;left:438.60px;top:500.61px;width:45.90px;height:13.00px;line-height:13.00px;text-align:center;">T</div>
<div class="t" style="font:10px 'Liberation Serif', serif;color:#000;left:484.50px;top:500.61px;width:46.20px;height:13.00px;line-height:13.00px;text-align:center;">T</div>
<div class="t" style="font:10px 'Liberation Serif', serif;color:#000;left:530.70px;top:500.61px;width:35.20px;height:13.00px;line-height:13.00px;text-align:center;">T</div>
<div class="t" style="font:10px 'Liberation Serif', serif;color:#000;left:565.90px;top:500.61px;width:35.20px;height:13.00px;line-height:13.00px;text-align:center;">T</div>
<div class="t" style="font:10px 'Liberation Serif', serif;color:#000;left:601.10px;top:500.61px;width:28.70px;height:13.00px;line-height:13.00px;text-align:center;">T</div>
<div class="t" style="font:10px 'Liberation Serif', serif;color:#000;left:658.40px;top:500.61px;width:21.20px;height:13.00px;line-height:13.00px;text-align:center;">T</div>
<div class="t" style="font:10px 'Liberation Serif', serif;color:#000;left:701.00px;top:500.61px;width:21.80px;height:13.00px;line-height:13.00px;text-align:center;">T</div>
<div class="t" style="font:10px 'Liberation Serif', serif;color:#000;left:722.80px;top:500.61px;width:21.20px;height:13.00px;line-height:13.00px;text-align:center;">8</div>
<div class="t" style="font:10px 'Liberation Serif', serif;color:#000;left:744.00px;top:500.61px;width:22.60px;height:13.00px;line-height:13.00px;text-align:center;">T</div>
<div class="t" style="font:10px 'Liberation Serif', serif;color:#000;left:766.60px;top:500.61px;width:22.70px;height:13.00px;line-height:13.00px;text-align:center;">T</div>
<div class="t" style="font:10px 'Liberation Serif', serif;color:#000;left:789.30px;top:500.61px;width:23.00px;height:13.00px;line-height:13.00px;text-align:center;">T</div>
<div class="t" style="font:10px 'Liberation Serif', serif;color:#000;left:812.30px;top:500.61px;width:22.70px;height:13.00px;line-height:13.00px;text-align:center;">T</div>
<div class="t" style="font:10px 'Liberation Serif', serif;color:#000;left:835.00px;top:500.61px;width:22.70px;height:13.00px;line-height:13.00px;text-align:center;">T</div>
<div class="t" style="font:10px 'Liberation Serif', serif;color:#000;left:857.70px;top:500.61px;width:29.30px;height:13.00px;line-height:13.00px;text-align:center;">T</div>
<div class="t" style="font:10px 'Liberation Serif', serif;color:#000;left:887.00px;top:500.61px;width:28.60px;height:13.00px;line-height:13.00px;text-align:center;">T</div>
<div class="t" style="font:10px 'Liberation Serif', serif;color:#000;left:915.60px;top:500.61px;width:28.60px;height:13.00px;line-height:13.00px;text-align:center;">T</div>
<div class="t" style="font:10px 'Liberation Serif', serif;color:#000;left:944.20px;top:500.61px;width:23.00px;height:13.00px;line-height:13.00px;text-align:center;">T</div>
<div class="t" style="font:10px 'Liberation Serif', serif;color:#000;left:967.20px;top:500.61px;width:23.10px;height:13.00px;line-height:13.00px;text-align:center;">T</div>
<div class="t" style="font:10px 'Liberation Serif', serif;color:#000;left:990.30px;top:500.61px;width:22.60px;height:13.00px;line-height:13.00px;text-align:center;">T</div>
<div class="t" style="font:10px 'Liberation Serif', serif;color:#000;left:1012.90px;top:500.61px;width:22.90px;height:13.00px;line-height:13.00px;text-align:center;">T</div>
<div class="t" style="font:10px 'Liberation Serif', serif;color:#000;left:1055.60px;top:500.61px;width:19.40px;height:13.00px;line-height:13.00px;text-align:center;">x</div>
<div class="t" style="font:10px 'Liberation Serif', serif;color:#000;left:1157.40px;top:500.61px;width:21.00px;height:13.00px;line-height:13.00px;text-align:center;">x</div>
<div class="t" style="font:10px 'Liberation Serif', serif;color:#000;left:28.00px;top:518.84px;width:27.00px;height:13.00px;line-height:13.00px;text-align:center;">19</div>
<div class="t" style="font:10px 'Liberation Serif', serif;color:#000;left:58.50px;top:518.84px;height:13.00px;line-height:13.00px;">Nguyễn Hoàng Minh</div>
<div class="t" style="font:10px 'Liberation Serif', serif;color:#000;left:182.00px;top:518.84px;width:69.00px;height:13.00px;line-height:13.00px;text-align:center;">28/03/2014</div>
<div class="t" style="font:10px 'Liberation Serif', serif;color:#000;left:278.00px;top:518.84px;width:21.00px;height:13.00px;line-height:13.00px;text-align:center;">T</div>
<div class="t" style="font:10px 'Liberation Serif', serif;color:#000;left:299.00px;top:518.84px;width:21.60px;height:13.00px;line-height:13.00px;text-align:center;">8</div>
<div class="t" style="font:10px 'Liberation Serif', serif;color:#000;left:320.60px;top:518.84px;width:21.00px;height:13.00px;line-height:13.00px;text-align:center;">T</div>
<div class="t" style="font:10px 'Liberation Serif', serif;color:#000;left:341.60px;top:518.84px;width:21.40px;height:13.00px;line-height:13.00px;text-align:center;">8</div>
<div class="t" style="font:10px 'Liberation Serif', serif;color:#000;left:363.00px;top:518.84px;width:35.00px;height:13.00px;line-height:13.00px;text-align:center;">T</div>
<div class="t" style="font:10px 'Liberation Serif', serif;color:#000;left:398.00px;top:518.84px;width:40.60px;height:13.00px;line-height:13.00px;text-align:center;">T</div>
<div class="t" style="font:10px 'Liberation Serif', serif;color:#000;left:438.60px;top:518.84px;width:45.90px;height:13.00px;line-height:13.00px;text-align:center;">T</div>
<div class="t" style="font:10px 'Liberation Serif', serif;color:#000;left:484.50px;top:518.84px;width:46.20px;height:13.00px;line-height:13.00px;text-align:center;">T</div>
<div class="t" style="font:10px 'Liberation Serif', serif;color:#000;left:530.70px;top:518.84px;width:35.20px;height:13.00px;line-height:13.00px;text-align:center;">T</div>
<div class="t" style="font:10px 'Liberation Serif', serif;color:#000;left:565.90px;top:518.84px;width:35.20px;height:13.00px;line-height:13.00px;text-align:center;">T</div>
<div class="t" style="font:10px 'Liberation Serif', serif;color:#000;left:601.10px;top:518.84px;width:28.70px;height:13.00px;line-height:13.00px;text-align:center;">T</div>
<div class="t" style="font:10px 'Liberation Serif', serif;color:#000;left:658.40px;top:518.84px;width:21.20px;height:13.00px;line-height:13.00px;text-align:center;">T</div>
<div class="t" style="font:10px 'Liberation Serif', serif;color:#000;left:701.00px;top:518.84px;width:21.80px;height:13.00px;line-height:13.00px;text-align:center;">T</div>
<div class="t" style="font:10px 'Liberation Serif', serif;color:#000;left:722.80px;top:518.84px;width:21.20px;height:13.00px;line-height:13.00px;text-align:center;">8</div>
<div class="t" style="font:10px 'Liberation Serif', serif;color:#000;left:744.00px;top:518.84px;width:22.60px;height:13.00px;line-height:13.00px;text-align:center;">T</div>
<div class="t" style="font:10px 'Liberation Serif', serif;color:#000;left:766.60px;top:518.84px;width:22.70px;height:13.00px;line-height:13.00px;text-align:center;">T</div>
<div class="t" style="font:10px 'Liberation Serif', serif;color:#000;left:789.30px;top:518.84px;width:23.00px;height:13.00px;line-height:13.00px;text-align:center;">T</div>
<div class="t" style="font:10px 'Liberation Serif', serif;color:#000;left:812.30px;top:518.84px;width:22.70px;height:13.00px;line-height:13.00px;text-align:center;">T</div>
<div class="t" style="font:10px 'Liberation Serif', serif;color:#000;left:835.00px;top:518.84px;width:22.70px;height:13.00px;line-height:13.00px;text-align:center;">T</div>
<div class="t" style="font:10px 'Liberation Serif', serif;color:#000;left:857.70px;top:518.84px;width:29.30px;height:13.00px;line-height:13.00px;text-align:center;">T</div>
<div class="t" style="font:10px 'Liberation Serif', serif;color:#000;left:887.00px;top:518.84px;width:28.60px;height:13.00px;line-height:13.00px;text-align:center;">T</div>
<div class="t" style="font:10px 'Liberation Serif', serif;color:#000;left:915.60px;top:518.84px;width:28.60px;height:13.00px;line-height:13.00px;text-align:center;">T</div>
<div class="t" style="font:10px 'Liberation Serif', serif;color:#000;left:944.20px;top:518.84px;width:23.00px;height:13.00px;line-height:13.00px;text-align:center;">T</div>
<div class="t" style="font:10px 'Liberation Serif', serif;color:#000;left:967.20px;top:518.84px;width:23.10px;height:13.00px;line-height:13.00px;text-align:center;">T</div>
<div class="t" style="font:10px 'Liberation Serif', serif;color:#000;left:990.30px;top:518.84px;width:22.60px;height:13.00px;line-height:13.00px;text-align:center;">T</div>
<div class="t" style="font:10px 'Liberation Serif', serif;color:#000;left:1012.90px;top:518.84px;width:22.90px;height:13.00px;line-height:13.00px;text-align:center;">T</div>
<div class="t" style="font:10px 'Liberation Serif', serif;color:#000;left:1055.60px;top:518.84px;width:19.40px;height:13.00px;line-height:13.00px;text-align:center;">x</div>
<div class="t" style="font:10px 'Liberation Serif', serif;color:#000;left:1157.40px;top:518.84px;width:21.00px;height:13.00px;line-height:13.00px;text-align:center;">x</div>
<div class="t" style="font:10px 'Liberation Serif', serif;color:#000;text-decoration:line-through;text-decoration-thickness:1.3px;-webkit-text-stroke:0.2px #000;left:28.00px;top:537.07px;width:27.00px;height:13.00px;line-height:13.00px;text-align:center;">20</div>
<div class="t" style="font:10px 'Liberation Serif', serif;color:#000;text-decoration:line-through;text-decoration-thickness:1.3px;-webkit-text-stroke:0.2px #000;left:58.50px;top:537.07px;height:13.00px;line-height:13.00px;">Trần Quốc Minh</div>
<div class="t" style="font:10px 'Liberation Serif', serif;color:#000;text-decoration:line-through;text-decoration-thickness:1.3px;-webkit-text-stroke:0.2px #000;left:182.00px;top:537.07px;width:69.00px;height:13.00px;line-height:13.00px;text-align:center;">18/02/2014</div>
<div class="t" style="font:10px 'Liberation Serif', serif;color:#000;text-decoration:line-through;text-decoration-thickness:1.3px;-webkit-text-stroke:0.2px #000;left:1157.40px;top:537.07px;width:21.00px;height:13.00px;line-height:13.00px;text-align:center;">x</div>
<div class="t" style="font:10px 'Liberation Serif', serif;color:#000;left:28.00px;top:555.30px;width:27.00px;height:13.00px;line-height:13.00px;text-align:center;">21</div>
<div class="t" style="font:10px 'Liberation Serif', serif;color:#000;left:58.50px;top:555.30px;height:13.00px;line-height:13.00px;">Lê Ngọc Kim Mỹ</div>
<div class="t" style="font:10px 'Liberation Serif', serif;color:#000;left:182.00px;top:555.30px;width:69.00px;height:13.00px;line-height:13.00px;text-align:center;">14/09/2014</div>
<div class="t" style="font:10px 'Liberation Serif', serif;color:#000;left:251.00px;top:555.30px;width:27.00px;height:13.00px;line-height:13.00px;text-align:center;">x</div>
<div class="t" style="font:10px 'Liberation Serif', serif;color:#000;left:278.00px;top:555.30px;width:21.00px;height:13.00px;line-height:13.00px;text-align:center;">T</div>
<div class="t" style="font:10px 'Liberation Serif', serif;color:#000;left:299.00px;top:555.30px;width:21.60px;height:13.00px;line-height:13.00px;text-align:center;">6</div>
<div class="t" style="font:10px 'Liberation Serif', serif;color:#000;left:320.60px;top:555.30px;width:21.00px;height:13.00px;line-height:13.00px;text-align:center;">T</div>
<div class="t" style="font:10px 'Liberation Serif', serif;color:#000;left:341.60px;top:555.30px;width:21.40px;height:13.00px;line-height:13.00px;text-align:center;">9</div>
<div class="t" style="font:10px 'Liberation Serif', serif;color:#000;left:363.00px;top:555.30px;width:35.00px;height:13.00px;line-height:13.00px;text-align:center;">T</div>
<div class="t" style="font:10px 'Liberation Serif', serif;color:#000;left:398.00px;top:555.30px;width:40.60px;height:13.00px;line-height:13.00px;text-align:center;">T</div>
<div class="t" style="font:10px 'Liberation Serif', serif;color:#000;left:438.60px;top:555.30px;width:45.90px;height:13.00px;line-height:13.00px;text-align:center;">T</div>
<div class="t" style="font:10px 'Liberation Serif', serif;color:#000;left:484.50px;top:555.30px;width:46.20px;height:13.00px;line-height:13.00px;text-align:center;">T</div>
<div class="t" style="font:10px 'Liberation Serif', serif;color:#000;left:530.70px;top:555.30px;width:35.20px;height:13.00px;line-height:13.00px;text-align:center;">T</div>
<div class="t" style="font:10px 'Liberation Serif', serif;color:#000;left:565.90px;top:555.30px;width:35.20px;height:13.00px;line-height:13.00px;text-align:center;">T</div>
<div class="t" style="font:10px 'Liberation Serif', serif;color:#000;left:601.10px;top:555.30px;width:28.70px;height:13.00px;line-height:13.00px;text-align:center;">T</div>
<div class="t" style="font:10px 'Liberation Serif', serif;color:#000;left:658.40px;top:555.30px;width:21.20px;height:13.00px;line-height:13.00px;text-align:center;">T</div>
<div class="t" style="font:10px 'Liberation Serif', serif;color:#000;left:701.00px;top:555.30px;width:21.80px;height:13.00px;line-height:13.00px;text-align:center;">T</div>
<div class="t" style="font:10px 'Liberation Serif', serif;color:#000;left:722.80px;top:555.30px;width:21.20px;height:13.00px;line-height:13.00px;text-align:center;">8</div>
<div class="t" style="font:10px 'Liberation Serif', serif;color:#000;left:744.00px;top:555.30px;width:22.60px;height:13.00px;line-height:13.00px;text-align:center;">T</div>
<div class="t" style="font:10px 'Liberation Serif', serif;color:#000;left:766.60px;top:555.30px;width:22.70px;height:13.00px;line-height:13.00px;text-align:center;">T</div>
<div class="t" style="font:10px 'Liberation Serif', serif;color:#000;left:789.30px;top:555.30px;width:23.00px;height:13.00px;line-height:13.00px;text-align:center;">T</div>
<div class="t" style="font:10px 'Liberation Serif', serif;color:#000;left:812.30px;top:555.30px;width:22.70px;height:13.00px;line-height:13.00px;text-align:center;">T</div>
<div class="t" style="font:10px 'Liberation Serif', serif;color:#000;left:835.00px;top:555.30px;width:22.70px;height:13.00px;line-height:13.00px;text-align:center;">T</div>
<div class="t" style="font:10px 'Liberation Serif', serif;color:#000;left:857.70px;top:555.30px;width:29.30px;height:13.00px;line-height:13.00px;text-align:center;">T</div>
<div class="t" style="font:10px 'Liberation Serif', serif;color:#000;left:887.00px;top:555.30px;width:28.60px;height:13.00px;line-height:13.00px;text-align:center;">T</div>
<div class="t" style="font:10px 'Liberation Serif', serif;color:#000;left:915.60px;top:555.30px;width:28.60px;height:13.00px;line-height:13.00px;text-align:center;">T</div>
<div class="t" style="font:10px 'Liberation Serif', serif;color:#000;left:944.20px;top:555.30px;width:23.00px;height:13.00px;line-height:13.00px;text-align:center;">T</div>
<div class="t" style="font:10px 'Liberation Serif', serif;color:#000;left:967.20px;top:555.30px;width:23.10px;height:13.00px;line-height:13.00px;text-align:center;">T</div>
<div class="t" style="font:10px 'Liberation Serif', serif;color:#000;left:990.30px;top:555.30px;width:22.60px;height:13.00px;line-height:13.00px;text-align:center;">T</div>
<div class="t" style="font:10px 'Liberation Serif', serif;color:#000;left:1012.90px;top:555.30px;width:22.90px;height:13.00px;line-height:13.00px;text-align:center;">T</div>
<div class="t" style="font:10px 'Liberation Serif', serif;color:#000;left:1075.00px;top:555.30px;width:19.80px;height:13.00px;line-height:13.00px;text-align:center;">x</div>
<div class="t" style="font:10px 'Liberation Serif', serif;color:#000;left:1157.40px;top:555.30px;width:21.00px;height:13.00px;line-height:13.00px;text-align:center;">x</div>
<div class="t" style="font:10px 'Liberation Serif', serif;color:#000;left:28.00px;top:573.53px;width:27.00px;height:13.00px;line-height:13.00px;text-align:center;">22</div>
<div class="t" style="font:10px 'Liberation Serif', serif;color:#000;left:58.50px;top:573.53px;height:13.00px;line-height:13.00px;">Nguyễn Minh Ngân</div>
<div class="t" style="font:10px 'Liberation Serif', serif;color:#000;left:182.00px;top:573.53px;width:69.00px;height:13.00px;line-height:13.00px;text-align:center;">26/08/2014</div>
<div class="t" style="font:10px 'Liberation Serif', serif;color:#000;left:251.00px;top:573.53px;width:27.00px;height:13.00px;line-height:13.00px;text-align:center;">x</div>
<div class="t" style="font:10px 'Liberation Serif', serif;color:#000;left:278.00px;top:573.53px;width:21.00px;height:13.00px;line-height:13.00px;text-align:center;">T</div>
<div class="t" style="font:10px 'Liberation Serif', serif;color:#000;left:299.00px;top:573.53px;width:21.60px;height:13.00px;line-height:13.00px;text-align:center;">5</div>
<div class="t" style="font:10px 'Liberation Serif', serif;color:#000;left:320.60px;top:573.53px;width:21.00px;height:13.00px;line-height:13.00px;text-align:center;">T</div>
<div class="t" style="font:10px 'Liberation Serif', serif;color:#000;left:341.60px;top:573.53px;width:21.40px;height:13.00px;line-height:13.00px;text-align:center;">8</div>
<div class="t" style="font:10px 'Liberation Serif', serif;color:#000;left:363.00px;top:573.53px;width:35.00px;height:13.00px;line-height:13.00px;text-align:center;">T</div>
<div class="t" style="font:10px 'Liberation Serif', serif;color:#000;left:398.00px;top:573.53px;width:40.60px;height:13.00px;line-height:13.00px;text-align:center;">T</div>
<div class="t" style="font:10px 'Liberation Serif', serif;color:#000;left:438.60px;top:573.53px;width:45.90px;height:13.00px;line-height:13.00px;text-align:center;">T</div>
<div class="t" style="font:10px 'Liberation Serif', serif;color:#000;left:484.50px;top:573.53px;width:46.20px;height:13.00px;line-height:13.00px;text-align:center;">T</div>
<div class="t" style="font:10px 'Liberation Serif', serif;color:#000;left:530.70px;top:573.53px;width:35.20px;height:13.00px;line-height:13.00px;text-align:center;">T</div>
<div class="t" style="font:10px 'Liberation Serif', serif;color:#000;left:565.90px;top:573.53px;width:35.20px;height:13.00px;line-height:13.00px;text-align:center;">T</div>
<div class="t" style="font:10px 'Liberation Serif', serif;color:#000;left:601.10px;top:573.53px;width:28.70px;height:13.00px;line-height:13.00px;text-align:center;">T</div>
<div class="t" style="font:10px 'Liberation Serif', serif;color:#000;left:658.40px;top:573.53px;width:21.20px;height:13.00px;line-height:13.00px;text-align:center;">T</div>
<div class="t" style="font:10px 'Liberation Serif', serif;color:#000;left:701.00px;top:573.53px;width:21.80px;height:13.00px;line-height:13.00px;text-align:center;">T</div>
<div class="t" style="font:10px 'Liberation Serif', serif;color:#000;left:722.80px;top:573.53px;width:21.20px;height:13.00px;line-height:13.00px;text-align:center;">8</div>
<div class="t" style="font:10px 'Liberation Serif', serif;color:#000;left:744.00px;top:573.53px;width:22.60px;height:13.00px;line-height:13.00px;text-align:center;">T</div>
<div class="t" style="font:10px 'Liberation Serif', serif;color:#000;left:766.60px;top:573.53px;width:22.70px;height:13.00px;line-height:13.00px;text-align:center;">T</div>
<div class="t" style="font:10px 'Liberation Serif', serif;color:#000;left:789.30px;top:573.53px;width:23.00px;height:13.00px;line-height:13.00px;text-align:center;">T</div>
<div class="t" style="font:10px 'Liberation Serif', serif;color:#000;left:812.30px;top:573.53px;width:22.70px;height:13.00px;line-height:13.00px;text-align:center;">T</div>
<div class="t" style="font:10px 'Liberation Serif', serif;color:#000;left:835.00px;top:573.53px;width:22.70px;height:13.00px;line-height:13.00px;text-align:center;">T</div>
<div class="t" style="font:10px 'Liberation Serif', serif;color:#000;left:857.70px;top:573.53px;width:29.30px;height:13.00px;line-height:13.00px;text-align:center;">T</div>
<div class="t" style="font:10px 'Liberation Serif', serif;color:#000;left:887.00px;top:573.53px;width:28.60px;height:13.00px;line-height:13.00px;text-align:center;">T</div>
<div class="t" style="font:10px 'Liberation Serif', serif;color:#000;left:915.60px;top:573.53px;width:28.60px;height:13.00px;line-height:13.00px;text-align:center;">T</div>
<div class="t" style="font:10px 'Liberation Serif', serif;color:#000;left:944.20px;top:573.53px;width:23.00px;height:13.00px;line-height:13.00px;text-align:center;">T</div>
<div class="t" style="font:10px 'Liberation Serif', serif;color:#000;left:967.20px;top:573.53px;width:23.10px;height:13.00px;line-height:13.00px;text-align:center;">T</div>
<div class="t" style="font:10px 'Liberation Serif', serif;color:#000;left:990.30px;top:573.53px;width:22.60px;height:13.00px;line-height:13.00px;text-align:center;">T</div>
<div class="t" style="font:10px 'Liberation Serif', serif;color:#000;left:1012.90px;top:573.53px;width:22.90px;height:13.00px;line-height:13.00px;text-align:center;">T</div>
<div class="t" style="font:10px 'Liberation Serif', serif;color:#000;left:1075.00px;top:573.53px;width:19.80px;height:13.00px;line-height:13.00px;text-align:center;">x</div>
<div class="t" style="font:10px 'Liberation Serif', serif;color:#000;left:1157.40px;top:573.53px;width:21.00px;height:13.00px;line-height:13.00px;text-align:center;">x</div>
<div class="t" style="font:10px 'Liberation Serif', serif;color:#000;text-decoration:line-through;text-decoration-thickness:1.3px;-webkit-text-stroke:0.2px #000;left:28.00px;top:591.76px;width:27.00px;height:13.00px;line-height:13.00px;text-align:center;">23</div>
<div class="t" style="font:10px 'Liberation Serif', serif;color:#000;text-decoration:line-through;text-decoration-thickness:1.3px;-webkit-text-stroke:0.2px #000;left:58.50px;top:591.76px;height:13.00px;line-height:13.00px;">Hà Cẩm Nhi</div>
<div class="t" style="font:10px 'Liberation Serif', serif;color:#000;text-decoration:line-through;text-decoration-thickness:1.3px;-webkit-text-stroke:0.2px #000;left:182.00px;top:591.76px;width:69.00px;height:13.00px;line-height:13.00px;text-align:center;">22/05/2014</div>
<div class="t" style="font:10px 'Liberation Serif', serif;color:#000;text-decoration:line-through;text-decoration-thickness:1.3px;-webkit-text-stroke:0.2px #000;left:251.00px;top:591.76px;width:27.00px;height:13.00px;line-height:13.00px;text-align:center;">x</div>
<div class="t" style="font:10px 'Liberation Serif', serif;color:#000;text-decoration:line-through;text-decoration-thickness:1.3px;-webkit-text-stroke:0.2px #000;left:1157.40px;top:591.76px;width:21.00px;height:13.00px;line-height:13.00px;text-align:center;">x</div>
</div>
<div style="left:1733px;top:787px;width:36px;height:36px;border-radius:50%;background:#f1f1f1;box-shadow:0 2px 3px rgba(0,0,0,0.25);"></div>
<div style="left:1733px;top:847px;width:36px;height:36px;border-radius:50%;background:#f1f1f1;box-shadow:0 2px 3px rgba(0,0,0,0.25);"></div>
<div style="left:1733px;top:893px;width:36px;height:36px;border-radius:50%;background:#f1f1f1;box-shadow:0 2px 3px rgba(0,0,0,0.25);"></div>
<svg style="left:1743px;top:797px" width="16" height="16" viewBox="0 0 16 16"><path d="M1 5.5 L5.5 5.5 L5.5 1 M10.5 1 L10.5 5.5 L15 5.5 M1 10.5 L5.5 10.5 L5.5 15 M10.5 15 L10.5 10.5 L15 10.5" fill="none" stroke="#757575" stroke-width="1.6"/></svg>
<svg style="left:1745px;top:859px" width="12" height="12" viewBox="0 0 12 12"><path d="M6 0 L6 12 M0 6 L12 6" stroke="#757575" stroke-width="1.6"/></svg>
<svg style="left:1745px;top:905px" width="12" height="12" viewBox="0 0 12 12"><path d="M0 6 L12 6" stroke="#757575" stroke-width="1.6"/></svg>
</body></html>
